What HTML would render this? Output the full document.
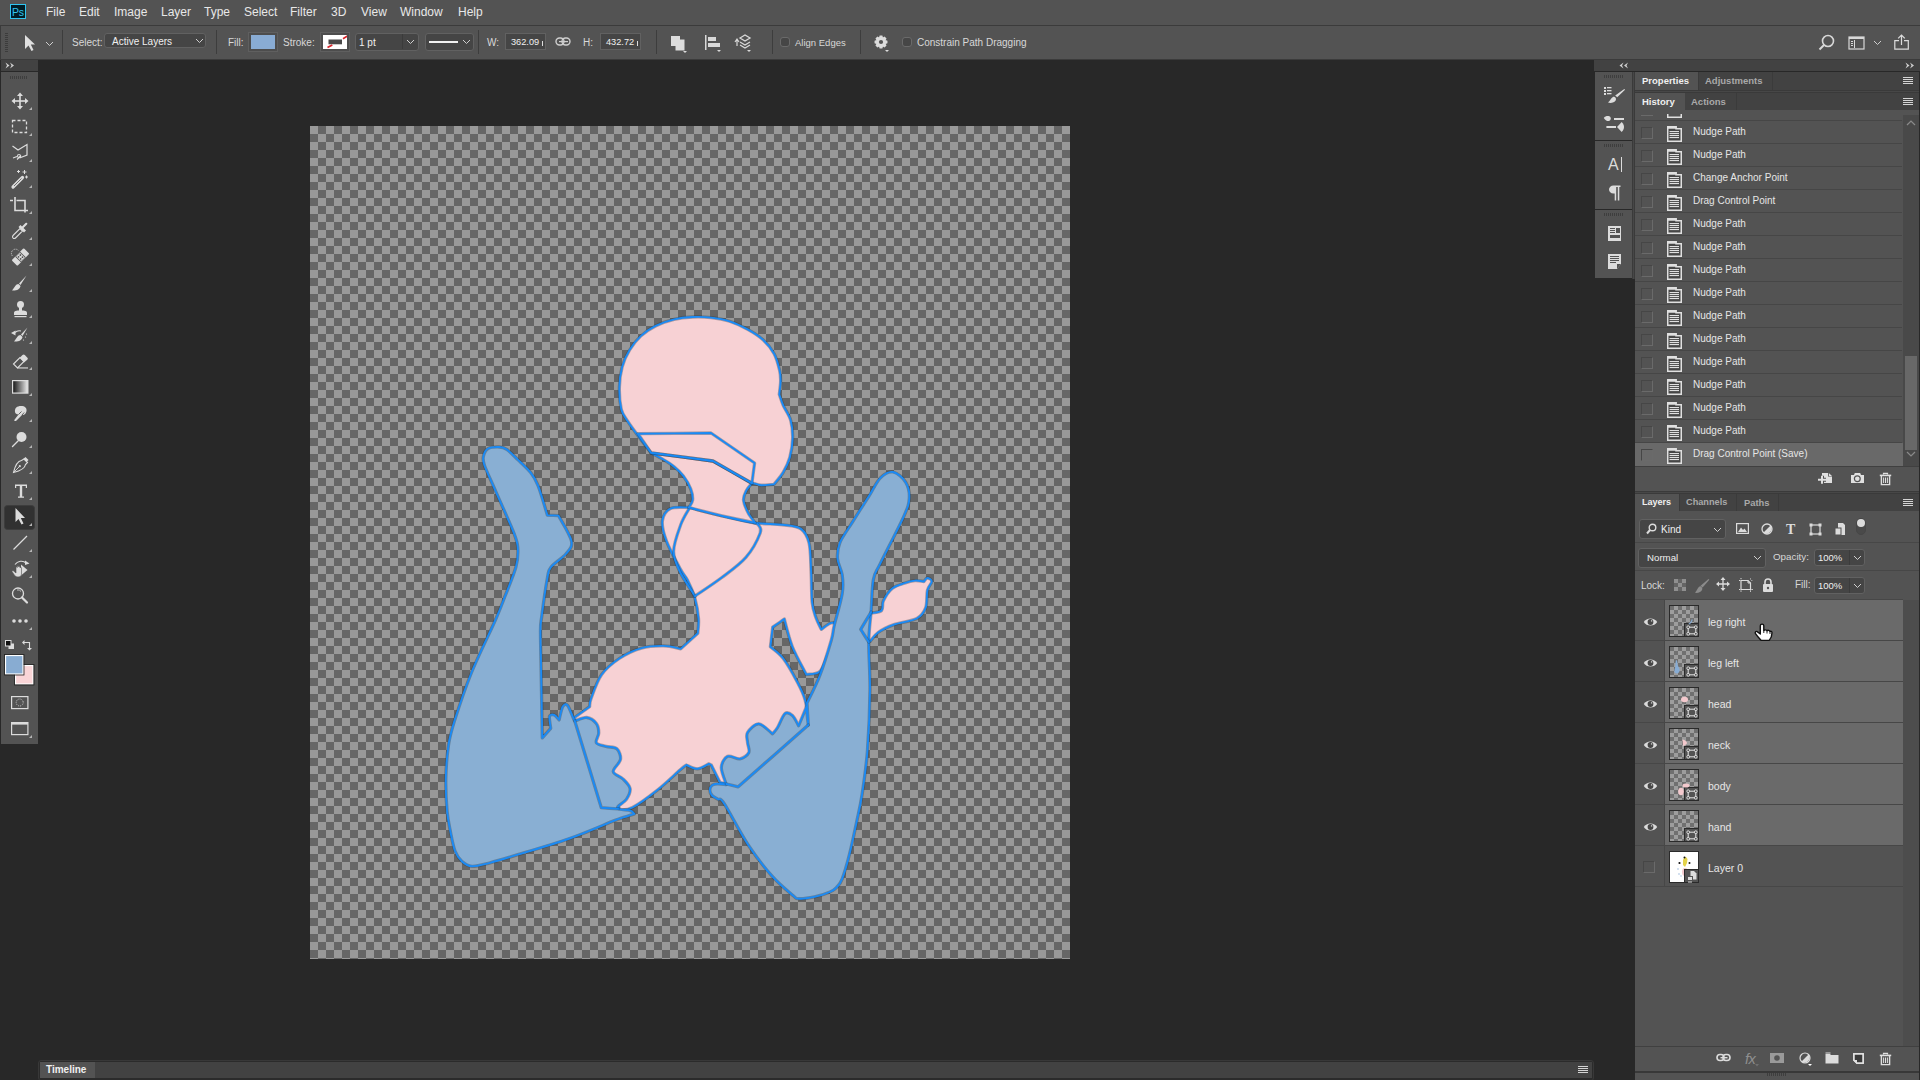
<!DOCTYPE html><html><head><meta charset="utf-8"><style>html,body{margin:0;padding:0;}body{width:1920px;height:1080px;overflow:hidden;position:relative;background:#282828;font-family:"Liberation Sans",sans-serif;}</style></head><body>
<div style="position:absolute;left:0px;top:0px;width:1920px;height:25px;background:#535353"></div>
<div style="position:absolute;left:0px;top:25px;width:1920px;height:1px;background:#3b3b3b"></div>
<div style="position:absolute;left:10px;top:4px;width:16px;height:15px;background:#001d26;box-sizing:border-box;border:1px solid #31c5f0"></div>
<div style="position:absolute;left:12px;top:6px;font-size:10.5px;line-height:12.5px;color:#31c5f0;font-weight:normal;white-space:nowrap;letter-spacing:-0.3px">Ps</div>
<div style="position:absolute;left:46px;top:5px;font-size:12px;line-height:14px;color:#e8e8e8;font-weight:normal;white-space:nowrap;">File</div>
<div style="position:absolute;left:79px;top:5px;font-size:12px;line-height:14px;color:#e8e8e8;font-weight:normal;white-space:nowrap;">Edit</div>
<div style="position:absolute;left:114px;top:5px;font-size:12px;line-height:14px;color:#e8e8e8;font-weight:normal;white-space:nowrap;">Image</div>
<div style="position:absolute;left:161px;top:5px;font-size:12px;line-height:14px;color:#e8e8e8;font-weight:normal;white-space:nowrap;">Layer</div>
<div style="position:absolute;left:204px;top:5px;font-size:12px;line-height:14px;color:#e8e8e8;font-weight:normal;white-space:nowrap;">Type</div>
<div style="position:absolute;left:244px;top:5px;font-size:12px;line-height:14px;color:#e8e8e8;font-weight:normal;white-space:nowrap;">Select</div>
<div style="position:absolute;left:290px;top:5px;font-size:12px;line-height:14px;color:#e8e8e8;font-weight:normal;white-space:nowrap;">Filter</div>
<div style="position:absolute;left:331px;top:5px;font-size:12px;line-height:14px;color:#e8e8e8;font-weight:normal;white-space:nowrap;">3D</div>
<div style="position:absolute;left:361px;top:5px;font-size:12px;line-height:14px;color:#e8e8e8;font-weight:normal;white-space:nowrap;">View</div>
<div style="position:absolute;left:400px;top:5px;font-size:12px;line-height:14px;color:#e8e8e8;font-weight:normal;white-space:nowrap;">Window</div>
<div style="position:absolute;left:458px;top:5px;font-size:12px;line-height:14px;color:#e8e8e8;font-weight:normal;white-space:nowrap;">Help</div>
<div style="position:absolute;left:0px;top:26px;width:1920px;height:33px;background:#535353"></div>
<div style="position:absolute;left:0px;top:26px;width:1px;height:33px;background:#3b3b3b"></div>
<div style="position:absolute;left:0px;top:59px;width:1920px;height:1px;background:#3b3b3b"></div>
<svg style="position:absolute;left:5px;top:33px;" width="4" height="20" viewBox="0 0 4 20"><rect x="0" y="0" width="3" height="1" fill="#3c3c3c"/><rect x="0" y="2" width="3" height="1" fill="#3c3c3c"/><rect x="0" y="4" width="3" height="1" fill="#3c3c3c"/><rect x="0" y="6" width="3" height="1" fill="#3c3c3c"/><rect x="0" y="8" width="3" height="1" fill="#3c3c3c"/><rect x="0" y="10" width="3" height="1" fill="#3c3c3c"/><rect x="0" y="12" width="3" height="1" fill="#3c3c3c"/><rect x="0" y="14" width="3" height="1" fill="#3c3c3c"/><rect x="0" y="16" width="3" height="1" fill="#3c3c3c"/><rect x="0" y="18" width="3" height="1" fill="#3c3c3c"/></svg>
<svg style="position:absolute;left:24px;top:34px;" width="12" height="18" viewBox="0 0 12 18"><path d="M1 1 L1 15 L4.5 11.5 L7.5 17 L9.5 16 L6.8 10.5 L11 10.5 Z" fill="#e0e0e0"/></svg>
<svg style="position:absolute;left:45px;top:41px;" width="9" height="6" viewBox="0 0 9 6"><path d="M1 1 L4.5 4.5 L8 1" stroke="#cfcfcf" fill="none" stroke-width="1"/></svg>
<div style="position:absolute;left:62px;top:30px;width:1px;height:24px;background:#3d3d3d"></div>
<div style="position:absolute;left:72px;top:37px;font-size:10px;line-height:12px;color:#d8d8d8;font-weight:normal;white-space:nowrap;">Select:</div>
<div style="position:absolute;left:104px;top:33px;width:102px;height:15px;background:#454545;border:1px solid #616161;border-radius:3px;box-sizing:border-box"></div>
<div style="position:absolute;left:112px;top:36px;font-size:10px;line-height:12px;color:#f0f0f0;font-weight:normal;white-space:nowrap;">Active Layers</div>
<svg style="position:absolute;left:195px;top:38px;" width="9" height="6" viewBox="0 0 9 6"><path d="M1 1 L4.5 4.5 L8 1" stroke="#cfcfcf" fill="none" stroke-width="1"/></svg>
<div style="position:absolute;left:216px;top:30px;width:1px;height:24px;background:#3d3d3d"></div>
<div style="position:absolute;left:228px;top:37px;font-size:10px;line-height:12px;color:#d8d8d8;font-weight:normal;white-space:nowrap;">Fill:</div>
<div style="position:absolute;left:248px;top:32px;width:30px;height:20px;background:#4d4d4d;border:1px solid #5f5f5f;box-sizing:border-box"></div>
<div style="position:absolute;left:251px;top:35px;width:24px;height:14px;background:#89acd4"></div>
<div style="position:absolute;left:283px;top:37px;font-size:10px;line-height:12px;color:#d8d8d8;font-weight:normal;white-space:nowrap;">Stroke:</div>
<div style="position:absolute;left:320px;top:32px;width:30px;height:20px;background:#4d4d4d;border:1px solid #5f5f5f;box-sizing:border-box"></div>
<svg style="position:absolute;left:323px;top:35px;" width="24" height="14" viewBox="0 0 24 14"><rect width="24" height="14" fill="#fff"/><rect x="5.5" y="4.5" width="13.5" height="4.8" fill="#4a4a4a"/><path d="M4.5 12.6 L9.3 9.9 M20 3.7 L24.5 1" stroke="#d9242a" stroke-width="1.7"/></svg>
<div style="position:absolute;left:355px;top:33px;width:64px;height:18px;background:#454545;border:1px solid #616161;border-radius:3px;box-sizing:border-box"></div>
<div style="position:absolute;left:402px;top:34px;width:1px;height:15px;background:#3b3b3b"></div>
<div style="position:absolute;left:359px;top:37px;font-size:10px;line-height:12px;color:#f0f0f0;font-weight:normal;white-space:nowrap;">1 pt</div>
<svg style="position:absolute;left:406px;top:39px;" width="9" height="6" viewBox="0 0 9 6"><path d="M1 1 L4.5 4.5 L8 1" stroke="#cfcfcf" fill="none" stroke-width="1"/></svg>
<div style="position:absolute;left:425px;top:33px;width:49px;height:18px;background:#454545;border:1px solid #616161;border-radius:3px;box-sizing:border-box"></div>
<div style="position:absolute;left:429px;top:41px;width:29px;height:2px;background:#f0f0f0"></div>
<svg style="position:absolute;left:462px;top:39px;" width="9" height="6" viewBox="0 0 9 6"><path d="M1 1 L4.5 4.5 L8 1" stroke="#cfcfcf" fill="none" stroke-width="1"/></svg>
<div style="position:absolute;left:478px;top:30px;width:1px;height:24px;background:#3d3d3d"></div>
<div style="position:absolute;left:487px;top:37px;font-size:10px;line-height:12px;color:#d8d8d8;font-weight:normal;white-space:nowrap;">W:</div>
<div style="position:absolute;left:505px;top:33px;width:41px;height:17px;background:#454545;border:1px solid #616161;box-sizing:border-box"></div>
<div style="position:absolute;left:511px;top:37px;font-size:9.2px;line-height:11.2px;color:#f0f0f0;font-weight:normal;white-space:nowrap;">362.09</div>
<div style="position:absolute;left:542px;top:41px;width:1px;height:5px;background:#ddd"></div>
<svg style="position:absolute;left:555px;top:37px;" width="17" height="9" viewBox="0 0 17 9"><rect x="1" y="1" width="8" height="7" rx="3.5" stroke="#cfcfcf" fill="none" stroke-width="1.4"/><rect x="7" y="1" width="8" height="7" rx="3.5" stroke="#cfcfcf" fill="none" stroke-width="1.4"/><rect x="4" y="4" width="9" height="1.2" fill="#cfcfcf"/></svg>
<div style="position:absolute;left:583px;top:37px;font-size:10px;line-height:12px;color:#d8d8d8;font-weight:normal;white-space:nowrap;">H:</div>
<div style="position:absolute;left:600px;top:33px;width:41px;height:17px;background:#454545;border:1px solid #616161;box-sizing:border-box"></div>
<div style="position:absolute;left:606px;top:37px;font-size:9.2px;line-height:11.2px;color:#f0f0f0;font-weight:normal;white-space:nowrap;">432.72</div>
<div style="position:absolute;left:637px;top:41px;width:1px;height:5px;background:#ddd"></div>
<div style="position:absolute;left:656px;top:30px;width:1px;height:24px;background:#3d3d3d"></div>
<svg style="position:absolute;left:670px;top:35px;" width="18" height="18" viewBox="0 0 18 18"><path d="M1 1 H10 V4.5 H14.5 V15.5 H5.5 V11 H1Z" fill="#dcdcdc"/><path d="M13 16 L17 16 L15 18Z" fill="#dcdcdc"/></svg>
<svg style="position:absolute;left:704px;top:34px;" width="18" height="18" viewBox="0 0 18 18"><rect x="1" y="1" width="1.5" height="15" fill="#d8d8d8"/><rect x="4" y="3" width="8" height="4" fill="#d8d8d8"/><rect x="4" y="9" width="12" height="4" fill="#d8d8d8"/><path d="M13 16 L17 16 L15 18Z" fill="#d8d8d8"/></svg>
<svg style="position:absolute;left:733px;top:33px;" width="20" height="20" viewBox="0 0 20 20"><path d="M2 9 L4 6 L6 9 M4 7 V13" stroke="#d8d8d8" fill="none" stroke-width="1.2"/><path d="M7 5 L12 2 L17 5 L12 8Z M7 9 L12 12 L17 9 M7 12 L12 15 L17 12" stroke="#d8d8d8" fill="none" stroke-width="1.3"/><path d="M14 17 L18 17 L16 19Z" fill="#d8d8d8"/></svg>
<div style="position:absolute;left:772px;top:30px;width:1px;height:24px;background:#3d3d3d"></div>
<div style="position:absolute;left:780px;top:37px;width:10px;height:10px;border:1px solid #6a6a6a;background:#464646;border-radius:3px;box-sizing:border-box"></div>
<div style="position:absolute;left:795px;top:37px;font-size:9.5px;line-height:11.5px;color:#d8d8d8;font-weight:normal;white-space:nowrap;">Align Edges</div>
<div style="position:absolute;left:860px;top:30px;width:1px;height:24px;background:#3d3d3d"></div>
<svg style="position:absolute;left:873px;top:34px;" width="17" height="18" viewBox="0 0 17 18"><path d="M12.48 6.01 L14.46 6.63 L14.46 9.37 L12.48 9.99 L12.57 9.76 L13.54 11.59 L11.59 13.54 L9.76 12.57 L9.99 12.48 L9.37 14.46 L6.63 14.46 L6.01 12.48 L6.24 12.57 L4.41 13.54 L2.46 11.59 L3.43 9.76 L3.52 9.99 L1.54 9.37 L1.54 6.63 L3.52 6.01 L3.43 6.24 L2.46 4.41 L4.41 2.46 L6.24 3.43 L6.01 3.52 L6.63 1.54 L9.37 1.54 L9.99 3.52 L9.76 3.43 L11.59 2.46 L13.54 4.41 L12.57 6.24Z" fill="#dcdcdc"/><circle cx="8" cy="8" r="2.1" fill="#535353"/><path d="M12 16 L16 16 L14 18Z" fill="#dcdcdc"/></svg>
<div style="position:absolute;left:902px;top:37px;width:10px;height:10px;border:1px solid #6a6a6a;background:#464646;border-radius:3px;box-sizing:border-box"></div>
<div style="position:absolute;left:917px;top:37px;font-size:10px;line-height:12px;color:#d8d8d8;font-weight:normal;white-space:nowrap;">Constrain Path Dragging</div>
<svg style="position:absolute;left:1818px;top:34px;" width="17" height="17" viewBox="0 0 17 17"><circle cx="10" cy="7" r="5.5" fill="none" stroke="#d8d8d8" stroke-width="1.6"/><path d="M6 11 L1.5 15.5" stroke="#d8d8d8" stroke-width="2"/></svg>
<svg style="position:absolute;left:1848px;top:36px;" width="17" height="14" viewBox="0 0 17 14"><rect x="1" y="1" width="15" height="12" fill="none" stroke="#d8d8d8" stroke-width="1.2"/><rect x="1" y="1" width="15" height="2" fill="#d8d8d8"/><rect x="3" y="5" width="2" height="1" fill="#d8d8d8"/><rect x="3" y="7" width="2" height="1" fill="#d8d8d8"/><rect x="3" y="9" width="2" height="1" fill="#d8d8d8"/><rect x="6" y="4" width="1" height="8" fill="#d8d8d8"/></svg>
<svg style="position:absolute;left:1873px;top:40px;" width="9" height="6" viewBox="0 0 9 6"><path d="M1 1 L4.5 4.5 L8 1" stroke="#cfcfcf" fill="none" stroke-width="1"/></svg>
<svg style="position:absolute;left:1893px;top:33px;" width="18" height="18" viewBox="0 0 18 18"><path d="M6 7.6 H1.8 V16.2 H15.3 V7.6 H11" fill="none" stroke="#dcdcdc" stroke-width="1.2"/><path d="M8.5 12 V2 M5.2 5.3 L8.5 2 L11.8 5.3" fill="none" stroke="#dcdcdc" stroke-width="1.2"/></svg>
<div style="position:absolute;left:0px;top:60px;width:39px;height:1020px;background:#282828"></div>
<div style="position:absolute;left:1px;top:60px;width:37px;height:11px;background:#424242"></div>
<svg style="position:absolute;left:5px;top:62px;" width="10" height="7" viewBox="0 0 10 7"><path d="M0.5 0.5 L4.5 3.5 L0.5 6.5 L2 3.5Z M5 0.5 L9 3.5 L5 6.5 L6.5 3.5Z" fill="#d0d0d0"/></svg>
<div style="position:absolute;left:1px;top:72px;width:37px;height:672px;background:#535353"></div>
<svg style="position:absolute;left:10px;top:76px;" width="18" height="4" viewBox="0 0 18 4"><rect x="0" y="0" width="1" height="3" fill="#3e3e3e"/><rect x="2" y="0" width="1" height="3" fill="#3e3e3e"/><rect x="4" y="0" width="1" height="3" fill="#3e3e3e"/><rect x="6" y="0" width="1" height="3" fill="#3e3e3e"/><rect x="8" y="0" width="1" height="3" fill="#3e3e3e"/><rect x="10" y="0" width="1" height="3" fill="#3e3e3e"/><rect x="12" y="0" width="1" height="3" fill="#3e3e3e"/><rect x="14" y="0" width="1" height="3" fill="#3e3e3e"/><rect x="16" y="0" width="1" height="3" fill="#3e3e3e"/></svg>
<svg style="position:absolute;left:0;top:0" width="40" height="750" viewBox="0 0 40 750"><g fill="#dcdcdc"><rect x="19.2" y="95" width="1.6" height="13"/><rect x="13.5" y="100.2" width="13" height="1.6"/><path d="M20 92.5 L23 96 H17Z M20 109.5 L23 106 H17Z M11.5 101 L15 98 V104Z M28.5 101 L25 98 V104Z"/></g><path d="M32 107 L32 110 L29 110 Z" fill="#b5b5b5"/><rect x="12.5" y="120.5" width="14" height="12" fill="none" stroke="#dcdcdc" stroke-width="1.3" stroke-dasharray="3 2"/><path d="M32 133 L32 136 L29 136 Z" fill="#b5b5b5"/><path d="M12.5 146 L18 150 L27 144.5 L27 155 L19.5 158 M17 159.5 L21 155.5 M13 158 L17 156.5" fill="none" stroke="#dcdcdc" stroke-width="1.2"/><circle cx="19" cy="156" r="1.5" fill="none" stroke="#dcdcdc" stroke-width="1.1"/><path d="M32 159 L32 162 L29 162 Z" fill="#b5b5b5"/><path d="M13 187 L22.5 177.5" stroke="#dcdcdc" stroke-width="3.2" stroke-linecap="round"/><path d="M14 186 L21.5 178.5" stroke="#535353" stroke-width="0.8"/><path d="M18.5 170 V173 M17 171.5 H20 M24.5 170 V174 M22.5 172 H26.5 M26.5 175.5 V178.5 M25 177 H28" stroke="#dcdcdc" stroke-width="1"/><path d="M32 185 L32 188 L29 188 Z" fill="#b5b5b5"/><path d="M15 197 V210.5 H28 M10 200.5 H13 M16.5 200.5 H25 V212.5" fill="none" stroke="#dcdcdc" stroke-width="1.6"/><path d="M32 211 L32 214 L29 214 Z" fill="#b5b5b5"/><path d="M13.2 238.2 C12 237 12.5 236 13.5 235 L20 228.5 L22.5 231 L16 237.5 C15 238.5 14.2 239 13.2 238.2Z" fill="none" stroke="#dcdcdc" stroke-width="1.1"/><path d="M18.5 227 L24 232.5 L26 230.5 L23.5 228 L27 224.5 C28 223.5 27 222 25.5 223 L22 226.5 L20.5 225Z" fill="#dcdcdc"/><path d="M32 237 L32 240 L29 240 Z" fill="#b5b5b5"/><g transform="rotate(-45 20.5 257)"><rect x="12" y="253" width="17" height="8" rx="1" fill="#dcdcdc"/><rect x="17" y="253" width="7" height="8" fill="#535353"/><rect x="17.8" y="253.6" width="5.4" height="6.8" fill="#dcdcdc"/><circle cx="19.2" cy="255.5" r="0.9" fill="#535353"/><circle cx="21.8" cy="255.5" r="0.9" fill="#535353"/><circle cx="19.2" cy="258.5" r="0.9" fill="#535353"/><circle cx="21.8" cy="258.5" r="0.9" fill="#535353"/></g><path d="M12.5 256 A4 4 0 0 1 18.5 250.5" fill="none" stroke="#dcdcdc" stroke-width="0.9" stroke-dasharray="1 1"/><path d="M32 263 L32 266 L29 266 Z" fill="#b5b5b5"/><path d="M26.5 275.5 L19 283.5 L20.5 285 Z" fill="#dcdcdc"/><path d="M18.5 284 C15.5 284 15 287 12 290.5 C16 291 20 289.5 20.5 286Z" fill="#dcdcdc"/><path d="M32 289 L32 292 L29 292 Z" fill="#b5b5b5"/><circle cx="20.5" cy="304.5" r="3.5" fill="#dcdcdc"/><rect x="19" y="306" width="3" height="5" fill="#dcdcdc"/><path d="M14 313 C14 311 16 310.5 20.5 310.5 C25 310.5 27 311 27 313 V315 H14Z" fill="#dcdcdc"/><rect x="14.5" y="316" width="12" height="1.2" fill="#dcdcdc"/><path d="M32 315 L32 318 L29 318 Z" fill="#b5b5b5"/><path d="M27.5 327.5 L21 334.5 L22.5 336 Z" fill="#dcdcdc"/><path d="M20.5 335 C17.5 335 17 338 14 341.5 C18 342 22 340.5 22.5 337Z" fill="#dcdcdc"/><path d="M11 333 L15.5 330.5 L15.5 335.5Z" fill="#dcdcdc"/><path d="M15 332.5 C17 330.5 19 330.5 21 331" fill="none" stroke="#dcdcdc" stroke-width="1.1"/><circle cx="26.5" cy="334" r="0.6" fill="#dcdcdc"/><circle cx="25.5" cy="337" r="0.6" fill="#dcdcdc"/><circle cx="23.5" cy="340" r="0.6" fill="#dcdcdc"/><path d="M32 341 L32 344 L29 344 Z" fill="#b5b5b5"/><path d="M13.5 364 L20 357.5 L24 361.5 L17.5 368 Z" fill="none" stroke="#dcdcdc" stroke-width="1.1"/><path d="M20 357.5 L22.5 355 C23.3 354.2 24 354.2 24.8 355 L27.2 357.4 C28 358.2 28 358.9 27.2 359.7 L24 362.5Z" fill="#dcdcdc"/><rect x="17.5" y="367.4" width="10.5" height="1.1" fill="#dcdcdc"/><path d="M32 367 L32 370 L29 370 Z" fill="#b5b5b5"/><defs><linearGradient id="gr" x1="0" x2="1"><stop offset="0" stop-color="#111"/><stop offset="1" stop-color="#eee"/></linearGradient></defs><rect x="12.6" y="380.6" width="15.3" height="12.5" fill="url(#gr)" stroke="#dcdcdc" stroke-width="1.2"/><path d="M32 393 L32 396 L29 396 Z" fill="#b5b5b5"/><path d="M15 412 C14.5 408 17 406 21 406 C25 406 27 408 26.5 411 C26 414 24 415.5 22 415 L16.5 420.5 C15.5 421.5 14 421 14.3 420 L18.5 414.5 C16.5 414.5 15.2 413.5 15 412Z" fill="#dcdcdc"/><path d="M18.5 414.5 L21.5 411.5 M22 415 L24.2 412.5" stroke="#535353" stroke-width="0.9"/><path d="M32 419 L32 422 L29 422 Z" fill="#b5b5b5"/><circle cx="21.5" cy="437" r="5" fill="#dcdcdc"/><path d="M18 441 L12.5 446.5" stroke="#dcdcdc" stroke-width="1.4" stroke-linecap="round"/><path d="M32 445 L32 448 L29 448 Z" fill="#b5b5b5"/><path d="M24 459 L27.5 462.5 L25.5 464.5 C25 468 22 470.5 13.5 472.5 C15.5 464 18 461 21.5 460.5Z" fill="none" stroke="#dcdcdc" stroke-width="1.1"/><path d="M23.5 458.8 L25.5 457 L28.5 460 L26.5 462Z" fill="#dcdcdc"/><circle cx="19.8" cy="466.2" r="1.1" fill="#dcdcdc"/><path d="M13.8 472.2 L19.2 466.8" stroke="#dcdcdc" stroke-width="0.9"/><path d="M32 471 L32 474 L29 474 Z" fill="#b5b5b5"/><path d="M15 484.5 H27 V488 H25.8 V486 H22.2 V496.5 H24 V497.8 H18 V496.5 H19.8 V486 H16.2 V488 H15Z" fill="#dcdcdc"/><path d="M32 497 L32 500 L29 500 Z" fill="#b5b5b5"/><rect x="4.5" y="505.5" width="30" height="24" rx="3" fill="#313131" stroke="#3d3d3d" stroke-width="1"/><path d="M15.5 508 V522 L18.5 519 L21.5 524.5 L23.5 523.5 L20.8 518 L25 518Z" fill="#dcdcdc"/><path d="M32 523 L32 526 L29 526 Z" fill="#b5b5b5"/><path d="M13.5 549.5 L27 536" stroke="#dcdcdc" stroke-width="1.3"/><path d="M32 549 L32 552 L29 552 Z" fill="#b5b5b5"/><path d="M15 564.5 C17.5 561 23 560 26 563" fill="none" stroke="#dcdcdc" stroke-width="1.1"/><path d="M25 560.5 L29.5 563.5 L25 565Z" fill="#dcdcdc"/><path d="M21 564.5 L27.5 570 L21 575.5Z" fill="#dcdcdc"/><path d="M13 570.5 L16 573 V567.5 C16 566.5 17.3 566.5 17.3 567.5 V566.5 C17.3 565.5 18.7 565.5 18.7 566.5 V567 C18.7 566 20.1 566 20.1 567 V568 C20.1 567 21.5 567 21.5 568 V574 C21.5 576 20 577 18 577 C16 577 15 576 14 574.5 L12 571.5Z" fill="#dcdcdc" stroke="#535353" stroke-width="0.6"/><path d="M32 575 L32 578 L29 578 Z" fill="#b5b5b5"/><circle cx="18" cy="593.5" r="5.5" fill="none" stroke="#dcdcdc" stroke-width="1.3"/><path d="M22 597.5 L27 602.5" stroke="#dcdcdc" stroke-width="2.2" stroke-linecap="round"/><path d="M17 590 A3.5 3.5 0 0 1 21 591.5" fill="none" stroke="#dcdcdc" stroke-width="0.8"/><circle cx="14" cy="621" r="1.8" fill="#dcdcdc"/><circle cx="20" cy="621" r="1.8" fill="#dcdcdc"/><circle cx="26" cy="621" r="1.8" fill="#dcdcdc"/><path d="M32 627 L32 630 L29 630 Z" fill="#b5b5b5"/><rect x="8.5" y="643.5" width="5.5" height="5.5" fill="#dcdcdc"/><rect x="5.5" y="640.5" width="5.5" height="5.5" fill="#111" stroke="#dcdcdc" stroke-width="1"/><path d="M23.5 642.5 H29.5 V648.5" fill="none" stroke="#dcdcdc" stroke-width="1.1"/><path d="M22 642.5 L24.5 640 V645Z M29.5 650.5 L27 648 H32Z" fill="#dcdcdc"/><rect x="15.5" y="665.5" width="17.5" height="18.5" fill="#f9d5d7" stroke="#fff" stroke-width="1.2"/><rect x="14.5" y="664.5" width="19.5" height="20.5" fill="none" stroke="#222" stroke-width="0.8"/><rect x="5.5" y="655.5" width="17.5" height="18.5" fill="#88acd2" stroke="#fff" stroke-width="1.2"/><rect x="4.5" y="654.5" width="19.5" height="20.5" fill="none" stroke="#222" stroke-width="0.8"/><rect x="11.6" y="696.6" width="16.3" height="12" fill="none" stroke="#dcdcdc" stroke-width="1.2"/><circle cx="19.7" cy="702.5" r="3.5" fill="none" stroke="#dcdcdc" stroke-width="0.9" stroke-dasharray="0.9 1.1"/><rect x="11.6" y="722.6" width="16.3" height="12" fill="none" stroke="#dcdcdc" stroke-width="1.2"/><rect x="11.6" y="722.6" width="16.3" height="2" fill="#dcdcdc"/><path d="M32 735 L32 738 L29 738 Z" fill="#b5b5b5"/></svg>
<div style="position:absolute;left:310px;top:126px;width:760px;height:833px;background-color:#666666;background-image:linear-gradient(45deg,#999999 25%,transparent 25%,transparent 75%,#999999 75%),linear-gradient(45deg,#999999 25%,transparent 25%,transparent 75%,#999999 75%);background-size:16px 16px;background-position:8px 0,0 8px"></div>
<svg width="1920" height="1080" viewBox="0 0 1920 1080" style="position:absolute;left:0;top:0">
<g stroke="#1a8af5" stroke-width="1.9" stroke-linejoin="round" stroke-linecap="round">
<path d="M871.0 613.2 C872.8 612.8 879.5 612.6 881.6 610.5 C883.7 608.4 881.6 604.5 883.4 600.8 C885.2 597.1 888.7 591.4 892.2 588.5 C895.7 585.6 900.7 584.5 904.5 583.2 C908.3 581.9 911.8 580.9 915.0 580.6 C918.2 580.3 922.4 581.4 923.9 581.5 C924.5 580.9 926.1 578.0 927.4 578.0 C928.7 578.0 931.8 579.5 931.8 581.5 C931.8 583.5 928.4 585.9 927.4 590.3 C926.4 594.7 927.4 603.2 925.6 607.9 C923.8 612.6 922.1 615.7 916.8 618.5 C911.5 621.3 900.3 622.3 893.9 624.6 C887.5 626.9 882.0 629.7 878.1 632.5 C874.2 635.3 871.5 639.8 870.2 641.3 C868.5 639.4 861.7 631.9 860.0 630.0 C861.8 627.2 869.2 616.0 871.0 613.2Z" fill="#f7d1d4" stroke="none"/>
<path d="M871.0 613.2 C872.8 612.8 879.5 612.6 881.6 610.5 C883.7 608.4 881.6 604.5 883.4 600.8 C885.2 597.1 888.7 591.4 892.2 588.5 C895.7 585.6 900.7 584.5 904.5 583.2 C908.3 581.9 911.8 580.9 915.0 580.6 C918.2 580.3 922.4 581.4 923.9 581.5 C924.5 580.9 926.1 578.0 927.4 578.0 C928.7 578.0 931.8 579.5 931.8 581.5 C931.8 583.5 928.4 585.9 927.4 590.3 C926.4 594.7 927.4 603.2 925.6 607.9 C923.8 612.6 922.1 615.7 916.8 618.5 C911.5 621.3 900.3 622.3 893.9 624.6 C887.5 626.9 882.0 629.7 878.1 632.5 C874.2 635.3 871.5 639.8 870.2 641.3 C868.5 639.4 861.7 631.9 860.0 630.0 C861.8 627.2 869.2 616.0 871.0 613.2Z" fill="none" stroke="#203040" stroke-opacity="0.35" stroke-width="3.3"/>
<path d="M871.0 613.2 C872.8 612.8 879.5 612.6 881.6 610.5 C883.7 608.4 881.6 604.5 883.4 600.8 C885.2 597.1 888.7 591.4 892.2 588.5 C895.7 585.6 900.7 584.5 904.5 583.2 C908.3 581.9 911.8 580.9 915.0 580.6 C918.2 580.3 922.4 581.4 923.9 581.5 C924.5 580.9 926.1 578.0 927.4 578.0 C928.7 578.0 931.8 579.5 931.8 581.5 C931.8 583.5 928.4 585.9 927.4 590.3 C926.4 594.7 927.4 603.2 925.6 607.9 C923.8 612.6 922.1 615.7 916.8 618.5 C911.5 621.3 900.3 622.3 893.9 624.6 C887.5 626.9 882.0 629.7 878.1 632.5 C874.2 635.3 871.5 639.8 870.2 641.3 C868.5 639.4 861.7 631.9 860.0 630.0 C861.8 627.2 869.2 616.0 871.0 613.2Z" fill="none"/>
<path d="M688.9 507.5 C695.0 509.0 714.7 514.2 725.6 516.7 C736.5 519.2 744.6 521.4 754.1 522.8 C763.6 524.1 774.8 523.8 782.6 524.8 C790.4 525.8 796.5 525.8 800.9 528.9 C805.3 532.0 807.4 536.0 809.1 543.1 C810.8 550.2 810.6 561.9 811.1 571.7 C811.6 581.6 811.4 594.7 812.1 602.2 C812.9 609.7 814.1 612.2 815.6 616.7 C817.1 621.2 820.3 627.3 821.3 629.4 C822.6 628.4 827.1 624.8 829.4 623.6 C831.7 622.5 834.2 622.7 835.2 622.5 C836.0 625.4 839.2 637.1 840.0 640.0 C838.2 641.9 832.7 646.2 829.4 651.4 C826.1 656.6 824.1 667.2 820.2 671.1 C816.4 675.0 808.6 673.9 806.3 674.5 C804.0 669.9 796.1 656.0 792.4 646.8 C788.7 637.5 785.6 623.6 784.3 619.0 C782.4 620.4 774.6 625.8 772.7 627.1 C772.3 630.4 770.8 643.5 770.4 646.8 C772.5 648.7 778.7 652.5 783.1 658.3 C787.5 664.1 793.3 674.5 797.0 681.5 C800.7 688.5 803.1 692.8 805.1 700.0 C807.1 707.2 808.2 720.8 808.8 725.0 C800.7 735.8 768.1 779.2 760.0 790.0 C753.3 788.8 726.7 783.8 720.0 782.5 C718.5 779.6 712.8 767.9 711.3 765.0 C710.9 764.8 709.2 764.0 708.8 763.8 C706.9 764.6 701.2 768.6 697.5 768.8 C693.8 769.0 688.2 765.6 686.3 765.0 C685.2 765.8 684.8 765.8 680.0 770.0 C675.2 774.2 665.4 783.8 657.5 790.0 C649.6 796.2 638.8 804.2 632.5 807.5 C626.2 810.8 622.1 809.6 620.0 810.0 C612.4 794.6 581.8 733.2 574.1 717.8 C576.7 715.9 587.0 708.6 589.6 706.7 C589.9 705.3 589.1 703.8 591.1 698.5 C593.1 693.2 596.8 681.5 601.5 674.8 C606.2 668.1 612.6 663.0 619.3 658.5 C626.0 654.0 634.1 650.2 641.5 648.1 C648.9 646.0 657.2 645.8 663.7 645.9 C670.2 646.0 677.9 648.4 680.7 648.9 C683.6 646.3 694.9 635.9 697.8 633.3 C697.9 630.8 699.0 624.4 698.5 618.5 C698.0 612.6 696.6 604.2 694.8 597.8 C692.9 591.4 689.8 584.7 687.4 580.0 C685.0 575.3 684.2 576.1 680.7 569.6 C677.2 563.1 669.5 549.2 666.5 541.1 C663.5 533.0 661.7 526.1 662.4 520.7 C663.1 515.3 666.2 510.7 670.6 508.5 C675.0 506.3 685.9 507.7 688.9 507.5Z" fill="#f7d1d4" stroke="none"/>
<path d="M688.9 507.5 C695.0 509.0 714.7 514.2 725.6 516.7 C736.5 519.2 744.6 521.4 754.1 522.8 C763.6 524.1 774.8 523.8 782.6 524.8 C790.4 525.8 796.5 525.8 800.9 528.9 C805.3 532.0 807.4 536.0 809.1 543.1 C810.8 550.2 810.6 561.9 811.1 571.7 C811.6 581.6 811.4 594.7 812.1 602.2 C812.9 609.7 814.1 612.2 815.6 616.7 C817.1 621.2 820.3 627.3 821.3 629.4 C822.6 628.4 827.1 624.8 829.4 623.6 C831.7 622.5 834.2 622.7 835.2 622.5 C836.0 625.4 839.2 637.1 840.0 640.0 C838.2 641.9 832.7 646.2 829.4 651.4 C826.1 656.6 824.1 667.2 820.2 671.1 C816.4 675.0 808.6 673.9 806.3 674.5 C804.0 669.9 796.1 656.0 792.4 646.8 C788.7 637.5 785.6 623.6 784.3 619.0 C782.4 620.4 774.6 625.8 772.7 627.1 C772.3 630.4 770.8 643.5 770.4 646.8 C772.5 648.7 778.7 652.5 783.1 658.3 C787.5 664.1 793.3 674.5 797.0 681.5 C800.7 688.5 803.1 692.8 805.1 700.0 C807.1 707.2 808.2 720.8 808.8 725.0 C800.7 735.8 768.1 779.2 760.0 790.0 C753.3 788.8 726.7 783.8 720.0 782.5 C718.5 779.6 712.8 767.9 711.3 765.0 C710.9 764.8 709.2 764.0 708.8 763.8 C706.9 764.6 701.2 768.6 697.5 768.8 C693.8 769.0 688.2 765.6 686.3 765.0 C685.2 765.8 684.8 765.8 680.0 770.0 C675.2 774.2 665.4 783.8 657.5 790.0 C649.6 796.2 638.8 804.2 632.5 807.5 C626.2 810.8 622.1 809.6 620.0 810.0 C612.4 794.6 581.8 733.2 574.1 717.8 C576.7 715.9 587.0 708.6 589.6 706.7 C589.9 705.3 589.1 703.8 591.1 698.5 C593.1 693.2 596.8 681.5 601.5 674.8 C606.2 668.1 612.6 663.0 619.3 658.5 C626.0 654.0 634.1 650.2 641.5 648.1 C648.9 646.0 657.2 645.8 663.7 645.9 C670.2 646.0 677.9 648.4 680.7 648.9 C683.6 646.3 694.9 635.9 697.8 633.3 C697.9 630.8 699.0 624.4 698.5 618.5 C698.0 612.6 696.6 604.2 694.8 597.8 C692.9 591.4 689.8 584.7 687.4 580.0 C685.0 575.3 684.2 576.1 680.7 569.6 C677.2 563.1 669.5 549.2 666.5 541.1 C663.5 533.0 661.7 526.1 662.4 520.7 C663.1 515.3 666.2 510.7 670.6 508.5 C675.0 506.3 685.9 507.7 688.9 507.5Z" fill="none" stroke="#203040" stroke-opacity="0.35" stroke-width="3.3"/>
<path d="M688.9 507.5 C695.0 509.0 714.7 514.2 725.6 516.7 C736.5 519.2 744.6 521.4 754.1 522.8 C763.6 524.1 774.8 523.8 782.6 524.8 C790.4 525.8 796.5 525.8 800.9 528.9 C805.3 532.0 807.4 536.0 809.1 543.1 C810.8 550.2 810.6 561.9 811.1 571.7 C811.6 581.6 811.4 594.7 812.1 602.2 C812.9 609.7 814.1 612.2 815.6 616.7 C817.1 621.2 820.3 627.3 821.3 629.4 C822.6 628.4 827.1 624.8 829.4 623.6 C831.7 622.5 834.2 622.7 835.2 622.5 C836.0 625.4 839.2 637.1 840.0 640.0 C838.2 641.9 832.7 646.2 829.4 651.4 C826.1 656.6 824.1 667.2 820.2 671.1 C816.4 675.0 808.6 673.9 806.3 674.5 C804.0 669.9 796.1 656.0 792.4 646.8 C788.7 637.5 785.6 623.6 784.3 619.0 C782.4 620.4 774.6 625.8 772.7 627.1 C772.3 630.4 770.8 643.5 770.4 646.8 C772.5 648.7 778.7 652.5 783.1 658.3 C787.5 664.1 793.3 674.5 797.0 681.5 C800.7 688.5 803.1 692.8 805.1 700.0 C807.1 707.2 808.2 720.8 808.8 725.0 C800.7 735.8 768.1 779.2 760.0 790.0 C753.3 788.8 726.7 783.8 720.0 782.5 C718.5 779.6 712.8 767.9 711.3 765.0 C710.9 764.8 709.2 764.0 708.8 763.8 C706.9 764.6 701.2 768.6 697.5 768.8 C693.8 769.0 688.2 765.6 686.3 765.0 C685.2 765.8 684.8 765.8 680.0 770.0 C675.2 774.2 665.4 783.8 657.5 790.0 C649.6 796.2 638.8 804.2 632.5 807.5 C626.2 810.8 622.1 809.6 620.0 810.0 C612.4 794.6 581.8 733.2 574.1 717.8 C576.7 715.9 587.0 708.6 589.6 706.7 C589.9 705.3 589.1 703.8 591.1 698.5 C593.1 693.2 596.8 681.5 601.5 674.8 C606.2 668.1 612.6 663.0 619.3 658.5 C626.0 654.0 634.1 650.2 641.5 648.1 C648.9 646.0 657.2 645.8 663.7 645.9 C670.2 646.0 677.9 648.4 680.7 648.9 C683.6 646.3 694.9 635.9 697.8 633.3 C697.9 630.8 699.0 624.4 698.5 618.5 C698.0 612.6 696.6 604.2 694.8 597.8 C692.9 591.4 689.8 584.7 687.4 580.0 C685.0 575.3 684.2 576.1 680.7 569.6 C677.2 563.1 669.5 549.2 666.5 541.1 C663.5 533.0 661.7 526.1 662.4 520.7 C663.1 515.3 666.2 510.7 670.6 508.5 C675.0 506.3 685.9 507.7 688.9 507.5Z" fill="none"/>
<path d="M688.9 509.0 C687.5 511.6 683.2 517.8 680.7 524.8 C678.2 531.8 673.7 543.4 673.6 551.3 C673.5 559.2 676.4 564.5 680.0 572.0 C683.6 579.5 692.5 592.1 695.0 596.1" fill="none" stroke="#203040" stroke-opacity="0.35" stroke-width="3.3"/>
<path d="M688.9 509.0 C687.5 511.6 683.2 517.8 680.7 524.8 C678.2 531.8 673.7 543.4 673.6 551.3 C673.5 559.2 676.4 564.5 680.0 572.0 C683.6 579.5 692.5 592.1 695.0 596.1" fill="none"/>
<path d="M695.0 596.1 C699.4 593.0 713.0 584.2 721.5 577.8 C730.0 571.3 739.4 564.9 745.9 557.4 C752.4 549.9 758.2 538.4 760.2 533.0 C762.2 527.6 759.2 526.5 758.2 524.8 C757.2 523.1 754.8 523.1 754.1 522.8" fill="none" stroke="#203040" stroke-opacity="0.35" stroke-width="3.3"/>
<path d="M695.0 596.1 C699.4 593.0 713.0 584.2 721.5 577.8 C730.0 571.3 739.4 564.9 745.9 557.4 C752.4 549.9 758.2 538.4 760.2 533.0 C762.2 527.6 759.2 526.5 758.2 524.8 C757.2 523.1 754.8 523.1 754.1 522.8" fill="none"/>
<path d="M651.0 452.8 C653.0 453.9 659.1 457.0 663.0 459.3 C666.9 461.6 670.7 463.9 674.1 466.7 C677.5 469.5 680.5 472.2 683.3 475.9 C686.1 479.6 689.2 484.9 690.7 488.9 C692.2 492.9 692.9 496.9 692.6 500.0 C692.3 503.1 689.5 506.2 688.9 507.5 C695.0 509.0 714.6 514.2 725.6 516.7 C736.6 519.2 750.2 521.8 755.1 522.8 C753.9 521.1 749.9 516.4 748.0 512.6 C746.1 508.8 743.8 503.6 743.5 500.0 C743.2 496.4 744.9 493.5 746.3 490.7 C747.7 487.9 751.0 484.5 751.9 483.3 C745.4 479.6 719.5 464.7 713.0 461.0 C702.7 459.6 661.3 454.2 651.0 452.8Z" fill="#f7d1d4" stroke="none"/>
<path d="M651.0 452.8 C653.0 453.9 659.1 457.0 663.0 459.3 C666.9 461.6 670.7 463.9 674.1 466.7 C677.5 469.5 680.5 472.2 683.3 475.9 C686.1 479.6 689.2 484.9 690.7 488.9 C692.2 492.9 692.9 496.9 692.6 500.0 C692.3 503.1 689.5 506.2 688.9 507.5 C695.0 509.0 714.6 514.2 725.6 516.7 C736.6 519.2 750.2 521.8 755.1 522.8 C753.9 521.1 749.9 516.4 748.0 512.6 C746.1 508.8 743.8 503.6 743.5 500.0 C743.2 496.4 744.9 493.5 746.3 490.7 C747.7 487.9 751.0 484.5 751.9 483.3 C745.4 479.6 719.5 464.7 713.0 461.0 C702.7 459.6 661.3 454.2 651.0 452.8Z" fill="none" stroke="#203040" stroke-opacity="0.35" stroke-width="3.3"/>
<path d="M651.0 452.8 C653.0 453.9 659.1 457.0 663.0 459.3 C666.9 461.6 670.7 463.9 674.1 466.7 C677.5 469.5 680.5 472.2 683.3 475.9 C686.1 479.6 689.2 484.9 690.7 488.9 C692.2 492.9 692.9 496.9 692.6 500.0 C692.3 503.1 689.5 506.2 688.9 507.5 C695.0 509.0 714.6 514.2 725.6 516.7 C736.6 519.2 750.2 521.8 755.1 522.8 C753.9 521.1 749.9 516.4 748.0 512.6 C746.1 508.8 743.8 503.6 743.5 500.0 C743.2 496.4 744.9 493.5 746.3 490.7 C747.7 487.9 751.0 484.5 751.9 483.3 C745.4 479.6 719.5 464.7 713.0 461.0 C702.7 459.6 661.3 454.2 651.0 452.8Z" fill="none"/>
<path d="M619.4 387.0 C619.5 379.9 620.5 372.9 622.2 366.7 C623.9 360.5 626.5 355.1 629.6 350.0 C632.7 344.9 636.4 340.1 640.7 336.1 C645.0 332.1 650.0 328.7 655.6 325.9 C661.2 323.1 667.9 320.9 674.1 319.4 C680.3 317.9 686.4 317.3 692.6 317.0 C698.8 316.7 704.9 316.9 711.1 317.6 C717.3 318.3 723.4 319.3 729.6 321.3 C735.8 323.3 742.5 326.5 748.1 329.6 C753.7 332.7 758.7 335.8 763.0 339.8 C767.3 343.8 771.3 348.6 774.1 353.7 C776.9 358.8 778.5 365.8 779.6 370.4 C780.7 375.0 780.7 377.5 780.6 381.5 C780.5 385.5 779.5 392.2 779.3 394.4 C780.0 396.3 781.4 401.3 783.3 405.6 C785.2 409.9 789.2 414.8 790.7 420.4 C792.2 425.9 792.8 432.7 792.6 438.9 C792.5 445.1 791.3 451.8 789.8 457.4 C788.2 462.9 785.9 467.7 783.3 472.2 C780.7 476.7 775.6 482.3 774.1 484.3 C771.9 484.4 764.5 485.4 761.1 485.2 C757.7 485.0 754.9 483.6 753.7 483.3 C753.4 483.3 752.2 483.3 751.9 483.3 C745.4 479.6 719.5 464.7 713.0 461.0 C702.7 459.6 661.3 454.2 651.0 452.8 C649.2 450.4 643.9 443.7 640.1 438.5 C636.3 433.3 631.1 426.6 628.0 421.7 C624.9 416.8 622.7 415.1 621.3 409.3 C619.9 403.5 619.2 394.1 619.4 387.0Z" fill="#f7d1d4" stroke="none"/>
<path d="M619.4 387.0 C619.5 379.9 620.5 372.9 622.2 366.7 C623.9 360.5 626.5 355.1 629.6 350.0 C632.7 344.9 636.4 340.1 640.7 336.1 C645.0 332.1 650.0 328.7 655.6 325.9 C661.2 323.1 667.9 320.9 674.1 319.4 C680.3 317.9 686.4 317.3 692.6 317.0 C698.8 316.7 704.9 316.9 711.1 317.6 C717.3 318.3 723.4 319.3 729.6 321.3 C735.8 323.3 742.5 326.5 748.1 329.6 C753.7 332.7 758.7 335.8 763.0 339.8 C767.3 343.8 771.3 348.6 774.1 353.7 C776.9 358.8 778.5 365.8 779.6 370.4 C780.7 375.0 780.7 377.5 780.6 381.5 C780.5 385.5 779.5 392.2 779.3 394.4 C780.0 396.3 781.4 401.3 783.3 405.6 C785.2 409.9 789.2 414.8 790.7 420.4 C792.2 425.9 792.8 432.7 792.6 438.9 C792.5 445.1 791.3 451.8 789.8 457.4 C788.2 462.9 785.9 467.7 783.3 472.2 C780.7 476.7 775.6 482.3 774.1 484.3 C771.9 484.4 764.5 485.4 761.1 485.2 C757.7 485.0 754.9 483.6 753.7 483.3 C753.4 483.3 752.2 483.3 751.9 483.3 C745.4 479.6 719.5 464.7 713.0 461.0 C702.7 459.6 661.3 454.2 651.0 452.8 C649.2 450.4 643.9 443.7 640.1 438.5 C636.3 433.3 631.1 426.6 628.0 421.7 C624.9 416.8 622.7 415.1 621.3 409.3 C619.9 403.5 619.2 394.1 619.4 387.0Z" fill="none" stroke="#203040" stroke-opacity="0.35" stroke-width="3.3"/>
<path d="M619.4 387.0 C619.5 379.9 620.5 372.9 622.2 366.7 C623.9 360.5 626.5 355.1 629.6 350.0 C632.7 344.9 636.4 340.1 640.7 336.1 C645.0 332.1 650.0 328.7 655.6 325.9 C661.2 323.1 667.9 320.9 674.1 319.4 C680.3 317.9 686.4 317.3 692.6 317.0 C698.8 316.7 704.9 316.9 711.1 317.6 C717.3 318.3 723.4 319.3 729.6 321.3 C735.8 323.3 742.5 326.5 748.1 329.6 C753.7 332.7 758.7 335.8 763.0 339.8 C767.3 343.8 771.3 348.6 774.1 353.7 C776.9 358.8 778.5 365.8 779.6 370.4 C780.7 375.0 780.7 377.5 780.6 381.5 C780.5 385.5 779.5 392.2 779.3 394.4 C780.0 396.3 781.4 401.3 783.3 405.6 C785.2 409.9 789.2 414.8 790.7 420.4 C792.2 425.9 792.8 432.7 792.6 438.9 C792.5 445.1 791.3 451.8 789.8 457.4 C788.2 462.9 785.9 467.7 783.3 472.2 C780.7 476.7 775.6 482.3 774.1 484.3 C771.9 484.4 764.5 485.4 761.1 485.2 C757.7 485.0 754.9 483.6 753.7 483.3 C753.4 483.3 752.2 483.3 751.9 483.3 C745.4 479.6 719.5 464.7 713.0 461.0 C702.7 459.6 661.3 454.2 651.0 452.8 C649.2 450.4 643.9 443.7 640.1 438.5 C636.3 433.3 631.1 426.6 628.0 421.7 C624.9 416.8 622.7 415.1 621.3 409.3 C619.9 403.5 619.2 394.1 619.4 387.0Z" fill="none"/>
<path d="M638.0 433.7 C650.2 433.6 698.8 433.1 711.0 433.0 C718.3 438.0 747.3 458.0 754.6 463.0 C754.1 466.4 752.4 479.9 751.9 483.3 C745.4 479.6 719.5 464.7 713.0 461.0 C702.7 459.6 661.3 454.2 651.0 452.8 C648.8 449.6 640.2 436.9 638.0 433.7Z" fill="none" stroke="#203040" stroke-opacity="0.35" stroke-width="3.3"/>
<path d="M638.0 433.7 C650.2 433.6 698.8 433.1 711.0 433.0 C718.3 438.0 747.3 458.0 754.6 463.0 C754.1 466.4 752.4 479.9 751.9 483.3 C745.4 479.6 719.5 464.7 713.0 461.0 C702.7 459.6 661.3 454.2 651.0 452.8 C648.8 449.6 640.2 436.9 638.0 433.7Z" fill="none"/>
<path d="M488.1 448.5 C490.7 447.0 496.2 446.9 499.3 447.0 C502.4 447.1 503.6 447.3 506.7 449.4 C509.8 451.5 513.8 455.7 517.8 459.6 C521.8 463.5 527.3 468.3 530.7 472.6 C534.1 476.9 535.3 478.5 538.1 485.6 C540.9 492.7 545.9 510.3 547.4 515.2 C549.2 515.3 556.6 515.5 558.5 515.6 C560.7 519.9 570.3 534.7 571.5 541.1 C572.7 547.5 569.3 549.7 565.9 554.0 C562.5 558.3 554.2 563.0 551.1 567.0 C548.0 571.0 548.9 570.1 547.4 578.1 C545.9 586.1 543.0 606.6 541.9 615.2 C540.8 623.9 540.6 621.2 540.5 630.0 C540.4 638.8 540.8 650.1 541.1 668.1 C541.4 686.1 542.1 726.3 542.3 737.9 C543.7 736.3 549.3 729.9 550.7 728.3 C550.5 726.3 548.9 718.5 549.5 716.3 C550.1 714.1 552.7 714.4 554.3 715.0 C555.9 715.6 558.3 719.1 559.1 719.9 C559.7 717.7 561.3 709.0 562.7 706.6 C564.1 704.2 565.8 703.4 567.6 705.4 C569.4 707.4 572.4 716.1 573.6 718.7 C574.8 721.3 574.6 720.6 574.8 721.0 C576.8 720.4 583.2 717.1 586.8 717.5 C590.4 717.9 594.4 720.9 596.4 723.5 C598.4 726.1 598.8 729.9 598.8 733.1 C598.8 736.3 595.2 740.5 596.4 742.7 C597.6 744.9 602.7 745.4 606.1 746.4 C609.5 747.4 614.5 746.6 616.9 748.8 C619.3 751.0 621.1 755.8 620.5 759.6 C619.9 763.4 612.9 768.4 613.3 771.6 C613.7 774.8 620.1 776.0 622.9 778.8 C625.7 781.6 629.5 785.1 630.1 788.5 C630.7 791.9 628.5 796.3 626.5 799.3 C624.5 802.3 619.2 804.8 618.1 806.5 C617.0 808.2 617.9 808.6 620.0 809.3 C622.1 810.0 628.1 809.8 630.5 810.6 C632.9 811.4 633.8 813.4 634.4 813.9 C633.1 814.3 629.8 815.4 626.6 816.5 C623.4 817.6 624.5 816.7 615.0 820.4 C605.5 824.1 585.8 832.8 569.6 838.5 C553.4 844.2 531.1 850.7 517.8 854.7 C504.5 858.8 497.6 860.9 490.0 862.8 C482.4 864.7 476.7 866.5 472.0 866.3 C467.3 866.1 464.8 864.0 462.0 861.5 C459.2 859.0 456.9 855.9 455.0 851.0 C453.1 846.1 451.8 838.6 450.5 832.0 C449.2 825.4 447.9 820.1 447.1 811.3 C446.3 802.4 445.6 789.9 445.8 778.9 C446.0 767.9 447.1 754.6 448.5 745.0 C449.9 735.4 450.6 733.1 454.4 721.1 C458.2 709.1 464.5 689.9 471.3 673.0 C478.1 656.1 489.8 632.7 495.4 620.0 C501.0 607.3 501.4 605.5 504.8 596.7 C508.2 587.9 513.7 575.0 515.9 567.0 C518.1 559.0 518.1 554.0 517.8 548.5 C517.5 543.0 517.8 543.3 514.1 533.7 C510.4 524.1 500.6 502.5 495.6 491.1 C490.7 479.7 486.4 471.1 484.4 465.2 C482.4 459.3 482.9 458.7 483.5 455.9 C484.1 453.1 485.5 450.0 488.1 448.5Z" fill="#89afd3" stroke="none"/>
<path d="M488.1 448.5 C490.7 447.0 496.2 446.9 499.3 447.0 C502.4 447.1 503.6 447.3 506.7 449.4 C509.8 451.5 513.8 455.7 517.8 459.6 C521.8 463.5 527.3 468.3 530.7 472.6 C534.1 476.9 535.3 478.5 538.1 485.6 C540.9 492.7 545.9 510.3 547.4 515.2 C549.2 515.3 556.6 515.5 558.5 515.6 C560.7 519.9 570.3 534.7 571.5 541.1 C572.7 547.5 569.3 549.7 565.9 554.0 C562.5 558.3 554.2 563.0 551.1 567.0 C548.0 571.0 548.9 570.1 547.4 578.1 C545.9 586.1 543.0 606.6 541.9 615.2 C540.8 623.9 540.6 621.2 540.5 630.0 C540.4 638.8 540.8 650.1 541.1 668.1 C541.4 686.1 542.1 726.3 542.3 737.9 C543.7 736.3 549.3 729.9 550.7 728.3 C550.5 726.3 548.9 718.5 549.5 716.3 C550.1 714.1 552.7 714.4 554.3 715.0 C555.9 715.6 558.3 719.1 559.1 719.9 C559.7 717.7 561.3 709.0 562.7 706.6 C564.1 704.2 565.8 703.4 567.6 705.4 C569.4 707.4 572.4 716.1 573.6 718.7 C574.8 721.3 574.6 720.6 574.8 721.0 C576.8 720.4 583.2 717.1 586.8 717.5 C590.4 717.9 594.4 720.9 596.4 723.5 C598.4 726.1 598.8 729.9 598.8 733.1 C598.8 736.3 595.2 740.5 596.4 742.7 C597.6 744.9 602.7 745.4 606.1 746.4 C609.5 747.4 614.5 746.6 616.9 748.8 C619.3 751.0 621.1 755.8 620.5 759.6 C619.9 763.4 612.9 768.4 613.3 771.6 C613.7 774.8 620.1 776.0 622.9 778.8 C625.7 781.6 629.5 785.1 630.1 788.5 C630.7 791.9 628.5 796.3 626.5 799.3 C624.5 802.3 619.2 804.8 618.1 806.5 C617.0 808.2 617.9 808.6 620.0 809.3 C622.1 810.0 628.1 809.8 630.5 810.6 C632.9 811.4 633.8 813.4 634.4 813.9 C633.1 814.3 629.8 815.4 626.6 816.5 C623.4 817.6 624.5 816.7 615.0 820.4 C605.5 824.1 585.8 832.8 569.6 838.5 C553.4 844.2 531.1 850.7 517.8 854.7 C504.5 858.8 497.6 860.9 490.0 862.8 C482.4 864.7 476.7 866.5 472.0 866.3 C467.3 866.1 464.8 864.0 462.0 861.5 C459.2 859.0 456.9 855.9 455.0 851.0 C453.1 846.1 451.8 838.6 450.5 832.0 C449.2 825.4 447.9 820.1 447.1 811.3 C446.3 802.4 445.6 789.9 445.8 778.9 C446.0 767.9 447.1 754.6 448.5 745.0 C449.9 735.4 450.6 733.1 454.4 721.1 C458.2 709.1 464.5 689.9 471.3 673.0 C478.1 656.1 489.8 632.7 495.4 620.0 C501.0 607.3 501.4 605.5 504.8 596.7 C508.2 587.9 513.7 575.0 515.9 567.0 C518.1 559.0 518.1 554.0 517.8 548.5 C517.5 543.0 517.8 543.3 514.1 533.7 C510.4 524.1 500.6 502.5 495.6 491.1 C490.7 479.7 486.4 471.1 484.4 465.2 C482.4 459.3 482.9 458.7 483.5 455.9 C484.1 453.1 485.5 450.0 488.1 448.5Z" fill="none" stroke="#203040" stroke-opacity="0.35" stroke-width="3.3"/>
<path d="M488.1 448.5 C490.7 447.0 496.2 446.9 499.3 447.0 C502.4 447.1 503.6 447.3 506.7 449.4 C509.8 451.5 513.8 455.7 517.8 459.6 C521.8 463.5 527.3 468.3 530.7 472.6 C534.1 476.9 535.3 478.5 538.1 485.6 C540.9 492.7 545.9 510.3 547.4 515.2 C549.2 515.3 556.6 515.5 558.5 515.6 C560.7 519.9 570.3 534.7 571.5 541.1 C572.7 547.5 569.3 549.7 565.9 554.0 C562.5 558.3 554.2 563.0 551.1 567.0 C548.0 571.0 548.9 570.1 547.4 578.1 C545.9 586.1 543.0 606.6 541.9 615.2 C540.8 623.9 540.6 621.2 540.5 630.0 C540.4 638.8 540.8 650.1 541.1 668.1 C541.4 686.1 542.1 726.3 542.3 737.9 C543.7 736.3 549.3 729.9 550.7 728.3 C550.5 726.3 548.9 718.5 549.5 716.3 C550.1 714.1 552.7 714.4 554.3 715.0 C555.9 715.6 558.3 719.1 559.1 719.9 C559.7 717.7 561.3 709.0 562.7 706.6 C564.1 704.2 565.8 703.4 567.6 705.4 C569.4 707.4 572.4 716.1 573.6 718.7 C574.8 721.3 574.6 720.6 574.8 721.0 C576.8 720.4 583.2 717.1 586.8 717.5 C590.4 717.9 594.4 720.9 596.4 723.5 C598.4 726.1 598.8 729.9 598.8 733.1 C598.8 736.3 595.2 740.5 596.4 742.7 C597.6 744.9 602.7 745.4 606.1 746.4 C609.5 747.4 614.5 746.6 616.9 748.8 C619.3 751.0 621.1 755.8 620.5 759.6 C619.9 763.4 612.9 768.4 613.3 771.6 C613.7 774.8 620.1 776.0 622.9 778.8 C625.7 781.6 629.5 785.1 630.1 788.5 C630.7 791.9 628.5 796.3 626.5 799.3 C624.5 802.3 619.2 804.8 618.1 806.5 C617.0 808.2 617.9 808.6 620.0 809.3 C622.1 810.0 628.1 809.8 630.5 810.6 C632.9 811.4 633.8 813.4 634.4 813.9 C633.1 814.3 629.8 815.4 626.6 816.5 C623.4 817.6 624.5 816.7 615.0 820.4 C605.5 824.1 585.8 832.8 569.6 838.5 C553.4 844.2 531.1 850.7 517.8 854.7 C504.5 858.8 497.6 860.9 490.0 862.8 C482.4 864.7 476.7 866.5 472.0 866.3 C467.3 866.1 464.8 864.0 462.0 861.5 C459.2 859.0 456.9 855.9 455.0 851.0 C453.1 846.1 451.8 838.6 450.5 832.0 C449.2 825.4 447.9 820.1 447.1 811.3 C446.3 802.4 445.6 789.9 445.8 778.9 C446.0 767.9 447.1 754.6 448.5 745.0 C449.9 735.4 450.6 733.1 454.4 721.1 C458.2 709.1 464.5 689.9 471.3 673.0 C478.1 656.1 489.8 632.7 495.4 620.0 C501.0 607.3 501.4 605.5 504.8 596.7 C508.2 587.9 513.7 575.0 515.9 567.0 C518.1 559.0 518.1 554.0 517.8 548.5 C517.5 543.0 517.8 543.3 514.1 533.7 C510.4 524.1 500.6 502.5 495.6 491.1 C490.7 479.7 486.4 471.1 484.4 465.2 C482.4 459.3 482.9 458.7 483.5 455.9 C484.1 453.1 485.5 450.0 488.1 448.5Z" fill="none"/>
<path d="M574.8 721.0 C579.2 735.5 596.9 793.2 601.3 807.7 C604.1 807.9 615.3 808.7 618.1 808.9" fill="none" stroke="#203040" stroke-opacity="0.35" stroke-width="3.3"/>
<path d="M574.8 721.0 C579.2 735.5 596.9 793.2 601.3 807.7 C604.1 807.9 615.3 808.7 618.1 808.9" fill="none"/>
<path d="M893.1 472.0 C897.3 472.8 903.1 478.0 905.8 482.4 C908.5 486.8 909.7 492.8 909.3 498.6 C908.9 504.4 908.3 506.3 903.5 517.1 C898.7 527.9 885.4 553.0 880.4 563.4 C875.4 573.8 874.9 571.5 873.4 579.6 C871.9 587.7 871.9 601.6 871.1 612.0 C870.3 622.4 869.0 629.1 868.8 642.1 C868.6 655.1 870.2 672.0 870.0 690.0 C869.8 708.0 868.8 732.5 867.5 750.0 C866.2 767.5 863.8 783.0 862.0 795.0 C860.2 807.0 858.7 812.2 856.6 822.2 C854.5 832.2 851.8 845.3 849.4 854.7 C847.0 864.1 844.4 873.3 842.2 878.8 C840.1 884.3 838.5 885.3 836.5 887.5 C834.5 889.7 833.7 890.4 830.0 892.0 C826.3 893.6 819.7 895.8 814.5 896.9 C809.3 898.0 802.4 898.9 798.8 898.7 C795.2 898.5 797.4 899.2 793.0 895.5 C788.6 891.8 779.8 884.8 772.3 876.4 C764.8 868.0 756.2 857.1 748.2 845.0 C740.2 832.9 729.1 811.1 724.1 803.5 C719.1 795.9 720.0 800.6 718.0 799.3 C716.0 798.0 713.4 797.0 712.0 795.5 C710.6 794.0 709.8 791.7 709.8 790.0 C709.8 788.3 710.7 786.3 712.0 785.3 C713.3 784.3 715.1 783.9 717.5 783.8 C719.9 783.7 724.8 784.4 726.3 784.5 C725.5 781.7 721.1 772.2 721.3 767.5 C721.5 762.8 724.4 757.8 727.5 756.3 C730.6 754.8 736.5 759.4 740.0 758.8 C743.5 758.2 747.5 755.2 748.8 752.5 C750.0 749.8 747.7 745.8 747.5 742.5 C747.3 739.2 745.6 735.6 747.5 732.5 C749.4 729.4 754.6 723.6 758.8 723.8 C763.0 724.0 770.2 732.1 772.5 733.8 C773.3 732.8 775.4 730.9 777.5 727.5 C779.6 724.1 782.5 715.5 785.0 713.5 C787.5 711.5 790.2 713.5 792.5 715.5 C794.8 717.5 797.6 724.0 798.6 725.7 C799.9 722.6 805.0 710.1 806.3 707.0 C806.6 710.0 808.0 722.0 808.3 725.0 C808.1 721.3 807.2 706.7 807.0 703.0 C809.2 698.3 816.0 685.5 820.0 675.0 C824.0 664.5 828.9 648.2 831.3 640.0 C833.6 631.8 832.3 633.6 834.1 625.9 C835.9 618.1 840.9 602.0 842.2 593.5 C843.6 585.0 843.0 580.8 842.2 575.0 C841.4 569.2 837.9 564.2 837.5 558.8 C837.1 553.4 837.4 548.8 839.9 542.6 C842.4 536.4 847.8 529.5 852.6 521.8 C857.4 514.1 864.2 503.6 868.8 496.3 C873.4 489.0 876.3 481.9 880.4 477.8 C884.5 473.8 888.9 471.2 893.1 472.0Z" fill="#89afd3" stroke="none"/>
<path d="M893.1 472.0 C897.3 472.8 903.1 478.0 905.8 482.4 C908.5 486.8 909.7 492.8 909.3 498.6 C908.9 504.4 908.3 506.3 903.5 517.1 C898.7 527.9 885.4 553.0 880.4 563.4 C875.4 573.8 874.9 571.5 873.4 579.6 C871.9 587.7 871.9 601.6 871.1 612.0 C870.3 622.4 869.0 629.1 868.8 642.1 C868.6 655.1 870.2 672.0 870.0 690.0 C869.8 708.0 868.8 732.5 867.5 750.0 C866.2 767.5 863.8 783.0 862.0 795.0 C860.2 807.0 858.7 812.2 856.6 822.2 C854.5 832.2 851.8 845.3 849.4 854.7 C847.0 864.1 844.4 873.3 842.2 878.8 C840.1 884.3 838.5 885.3 836.5 887.5 C834.5 889.7 833.7 890.4 830.0 892.0 C826.3 893.6 819.7 895.8 814.5 896.9 C809.3 898.0 802.4 898.9 798.8 898.7 C795.2 898.5 797.4 899.2 793.0 895.5 C788.6 891.8 779.8 884.8 772.3 876.4 C764.8 868.0 756.2 857.1 748.2 845.0 C740.2 832.9 729.1 811.1 724.1 803.5 C719.1 795.9 720.0 800.6 718.0 799.3 C716.0 798.0 713.4 797.0 712.0 795.5 C710.6 794.0 709.8 791.7 709.8 790.0 C709.8 788.3 710.7 786.3 712.0 785.3 C713.3 784.3 715.1 783.9 717.5 783.8 C719.9 783.7 724.8 784.4 726.3 784.5 C725.5 781.7 721.1 772.2 721.3 767.5 C721.5 762.8 724.4 757.8 727.5 756.3 C730.6 754.8 736.5 759.4 740.0 758.8 C743.5 758.2 747.5 755.2 748.8 752.5 C750.0 749.8 747.7 745.8 747.5 742.5 C747.3 739.2 745.6 735.6 747.5 732.5 C749.4 729.4 754.6 723.6 758.8 723.8 C763.0 724.0 770.2 732.1 772.5 733.8 C773.3 732.8 775.4 730.9 777.5 727.5 C779.6 724.1 782.5 715.5 785.0 713.5 C787.5 711.5 790.2 713.5 792.5 715.5 C794.8 717.5 797.6 724.0 798.6 725.7 C799.9 722.6 805.0 710.1 806.3 707.0 C806.6 710.0 808.0 722.0 808.3 725.0 C808.1 721.3 807.2 706.7 807.0 703.0 C809.2 698.3 816.0 685.5 820.0 675.0 C824.0 664.5 828.9 648.2 831.3 640.0 C833.6 631.8 832.3 633.6 834.1 625.9 C835.9 618.1 840.9 602.0 842.2 593.5 C843.6 585.0 843.0 580.8 842.2 575.0 C841.4 569.2 837.9 564.2 837.5 558.8 C837.1 553.4 837.4 548.8 839.9 542.6 C842.4 536.4 847.8 529.5 852.6 521.8 C857.4 514.1 864.2 503.6 868.8 496.3 C873.4 489.0 876.3 481.9 880.4 477.8 C884.5 473.8 888.9 471.2 893.1 472.0Z" fill="none" stroke="#203040" stroke-opacity="0.35" stroke-width="3.3"/>
<path d="M893.1 472.0 C897.3 472.8 903.1 478.0 905.8 482.4 C908.5 486.8 909.7 492.8 909.3 498.6 C908.9 504.4 908.3 506.3 903.5 517.1 C898.7 527.9 885.4 553.0 880.4 563.4 C875.4 573.8 874.9 571.5 873.4 579.6 C871.9 587.7 871.9 601.6 871.1 612.0 C870.3 622.4 869.0 629.1 868.8 642.1 C868.6 655.1 870.2 672.0 870.0 690.0 C869.8 708.0 868.8 732.5 867.5 750.0 C866.2 767.5 863.8 783.0 862.0 795.0 C860.2 807.0 858.7 812.2 856.6 822.2 C854.5 832.2 851.8 845.3 849.4 854.7 C847.0 864.1 844.4 873.3 842.2 878.8 C840.1 884.3 838.5 885.3 836.5 887.5 C834.5 889.7 833.7 890.4 830.0 892.0 C826.3 893.6 819.7 895.8 814.5 896.9 C809.3 898.0 802.4 898.9 798.8 898.7 C795.2 898.5 797.4 899.2 793.0 895.5 C788.6 891.8 779.8 884.8 772.3 876.4 C764.8 868.0 756.2 857.1 748.2 845.0 C740.2 832.9 729.1 811.1 724.1 803.5 C719.1 795.9 720.0 800.6 718.0 799.3 C716.0 798.0 713.4 797.0 712.0 795.5 C710.6 794.0 709.8 791.7 709.8 790.0 C709.8 788.3 710.7 786.3 712.0 785.3 C713.3 784.3 715.1 783.9 717.5 783.8 C719.9 783.7 724.8 784.4 726.3 784.5 C725.5 781.7 721.1 772.2 721.3 767.5 C721.5 762.8 724.4 757.8 727.5 756.3 C730.6 754.8 736.5 759.4 740.0 758.8 C743.5 758.2 747.5 755.2 748.8 752.5 C750.0 749.8 747.7 745.8 747.5 742.5 C747.3 739.2 745.6 735.6 747.5 732.5 C749.4 729.4 754.6 723.6 758.8 723.8 C763.0 724.0 770.2 732.1 772.5 733.8 C773.3 732.8 775.4 730.9 777.5 727.5 C779.6 724.1 782.5 715.5 785.0 713.5 C787.5 711.5 790.2 713.5 792.5 715.5 C794.8 717.5 797.6 724.0 798.6 725.7 C799.9 722.6 805.0 710.1 806.3 707.0 C806.6 710.0 808.0 722.0 808.3 725.0 C808.1 721.3 807.2 706.7 807.0 703.0 C809.2 698.3 816.0 685.5 820.0 675.0 C824.0 664.5 828.9 648.2 831.3 640.0 C833.6 631.8 832.3 633.6 834.1 625.9 C835.9 618.1 840.9 602.0 842.2 593.5 C843.6 585.0 843.0 580.8 842.2 575.0 C841.4 569.2 837.9 564.2 837.5 558.8 C837.1 553.4 837.4 548.8 839.9 542.6 C842.4 536.4 847.8 529.5 852.6 521.8 C857.4 514.1 864.2 503.6 868.8 496.3 C873.4 489.0 876.3 481.9 880.4 477.8 C884.5 473.8 888.9 471.2 893.1 472.0Z" fill="none"/>
<path d="M726.4 784.0 C728.4 784.5 736.2 786.3 738.2 786.8 C749.9 776.5 796.6 735.3 808.3 725.0" fill="none" stroke="#203040" stroke-opacity="0.35" stroke-width="3.3"/>
<path d="M726.4 784.0 C728.4 784.5 736.2 786.3 738.2 786.8 C749.9 776.5 796.6 735.3 808.3 725.0" fill="none"/>
<path d="M871.1 612.0 C869.4 614.9 862.4 626.5 860.7 629.4 C862.1 631.5 867.4 640.0 868.8 642.1" fill="none" stroke="#203040" stroke-opacity="0.35" stroke-width="3.3"/>
<path d="M871.1 612.0 C869.4 614.9 862.4 626.5 860.7 629.4 C862.1 631.5 867.4 640.0 868.8 642.1" fill="none"/>
</g></svg>
<div style="position:absolute;left:38px;top:1060px;width:1556px;height:21px;background:#2b2b2b;border:1px solid #383838;border-radius:3px;box-sizing:border-box"></div>
<div style="position:absolute;left:40px;top:1062px;width:1552px;height:16px;background:#424242"></div>
<div style="position:absolute;left:40px;top:1062px;width:55px;height:16px;background:#535353"></div>
<div style="position:absolute;left:46px;top:1064px;font-size:10px;line-height:12px;color:#f0f0f0;font-weight:bold;white-space:nowrap;">Timeline</div>
<svg style="position:absolute;left:1578px;top:1066px;" width="10" height="7" viewBox="0 0 10 7"><rect x="0" y="0" width="10" height="1" fill="#d4d4d4"/><rect x="0" y="2" width="10" height="1" fill="#d4d4d4"/><rect x="0" y="4" width="10" height="1" fill="#d4d4d4"/><rect x="0" y="6" width="10" height="1" fill="#d4d4d4"/></svg>
<div style="position:absolute;left:1594px;top:60px;width:40px;height:1020px;background:#282828"></div>
<div style="position:absolute;left:1594px;top:60px;width:326px;height:11px;background:#424242"></div>
<svg style="position:absolute;left:1619px;top:62px;" width="10" height="7" viewBox="0 0 10 7"><path d="M4.5 0.5 L0.5 3.5 L4.5 6.5 L3 3.5Z M9 0.5 L5 3.5 L9 6.5 L7.5 3.5Z" fill="#d0d0d0"/></svg>
<svg style="position:absolute;left:1905px;top:62px;" width="10" height="7" viewBox="0 0 10 7"><path d="M0.5 0.5 L4.5 3.5 L0.5 6.5 L2 3.5Z M5 0.5 L9 3.5 L5 6.5 L6.5 3.5Z" fill="#d0d0d0"/></svg>
<div style="position:absolute;left:1632px;top:72px;width:3px;height:207px;background:#474747;border-left:1px solid #3a3a3a;border-right:1px solid #3a3a3a;box-sizing:border-box"></div>
<div style="position:absolute;left:1595px;top:72px;width:37px;height:68px;background:#535353"></div>
<div style="position:absolute;left:1595px;top:141px;width:37px;height:68px;background:#535353"></div>
<div style="position:absolute;left:1595px;top:210px;width:37px;height:68px;background:#535353"></div>
<svg style="position:absolute;left:1604px;top:75px;" width="20" height="3" viewBox="0 0 20 3"><rect x="0" y="0" width="1" height="3" fill="#3e3e3e"/><rect x="2" y="0" width="1" height="3" fill="#3e3e3e"/><rect x="4" y="0" width="1" height="3" fill="#3e3e3e"/><rect x="6" y="0" width="1" height="3" fill="#3e3e3e"/><rect x="8" y="0" width="1" height="3" fill="#3e3e3e"/><rect x="10" y="0" width="1" height="3" fill="#3e3e3e"/><rect x="12" y="0" width="1" height="3" fill="#3e3e3e"/><rect x="14" y="0" width="1" height="3" fill="#3e3e3e"/><rect x="16" y="0" width="1" height="3" fill="#3e3e3e"/><rect x="18" y="0" width="1" height="3" fill="#3e3e3e"/></svg>
<svg style="position:absolute;left:1604px;top:144px;" width="20" height="3" viewBox="0 0 20 3"><rect x="0" y="0" width="1" height="3" fill="#3e3e3e"/><rect x="2" y="0" width="1" height="3" fill="#3e3e3e"/><rect x="4" y="0" width="1" height="3" fill="#3e3e3e"/><rect x="6" y="0" width="1" height="3" fill="#3e3e3e"/><rect x="8" y="0" width="1" height="3" fill="#3e3e3e"/><rect x="10" y="0" width="1" height="3" fill="#3e3e3e"/><rect x="12" y="0" width="1" height="3" fill="#3e3e3e"/><rect x="14" y="0" width="1" height="3" fill="#3e3e3e"/><rect x="16" y="0" width="1" height="3" fill="#3e3e3e"/><rect x="18" y="0" width="1" height="3" fill="#3e3e3e"/></svg>
<svg style="position:absolute;left:1604px;top:213px;" width="20" height="3" viewBox="0 0 20 3"><rect x="0" y="0" width="1" height="3" fill="#3e3e3e"/><rect x="2" y="0" width="1" height="3" fill="#3e3e3e"/><rect x="4" y="0" width="1" height="3" fill="#3e3e3e"/><rect x="6" y="0" width="1" height="3" fill="#3e3e3e"/><rect x="8" y="0" width="1" height="3" fill="#3e3e3e"/><rect x="10" y="0" width="1" height="3" fill="#3e3e3e"/><rect x="12" y="0" width="1" height="3" fill="#3e3e3e"/><rect x="14" y="0" width="1" height="3" fill="#3e3e3e"/><rect x="16" y="0" width="1" height="3" fill="#3e3e3e"/><rect x="18" y="0" width="1" height="3" fill="#3e3e3e"/></svg>
<svg style="position:absolute;left:1596px;top:80px;" width="36" height="56" viewBox="0 0 36 56"><g fill="#dcdcdc"><rect x="8" y="7" width="2" height="2"/><rect x="8" y="10" width="2" height="2"/><rect x="8" y="13" width="2" height="2"/><rect x="11" y="7" width="4.5" height="1.3"/><rect x="11" y="10" width="4.5" height="1.3"/><rect x="11" y="13" width="4.5" height="1.3"/><path d="M28.3 9 L29 9.8 L21.2 17.2 L19.2 15.4Z"/><path d="M16.6 17.2 C14.8 18.4 14.5 20.5 12 22.6 C15 23.5 18.5 22.5 19.8 20.2 C20.3 19 19.8 17.5 18.7 17 C18 16.7 17.3 16.8 16.6 17.2Z"/><path d="M7.8 37.9 C9 36.4 11 35.8 13.2 36.2 C14.3 36.5 14.8 37.5 14.8 38.6 C14.8 39.8 14.2 40.8 13 41 C11 41.3 9 40 7.8 37.9Z"/><rect x="18" y="38" width="10" height="2"/><rect x="10.4" y="46" width="9.6" height="2"/><path d="M21 47 L25.7 42 C27.3 43.5 28 45.2 28 47 C28 48.8 27.3 50.5 25.7 52Z"/></g></svg>
<div style="position:absolute;left:1608px;top:156px;font-size:16px;line-height:18px;color:#dcdcdc;font-weight:normal;white-space:nowrap;">A</div>
<div style="position:absolute;left:1621px;top:157px;width:1px;height:15px;background:#dcdcdc"></div>
<svg style="position:absolute;left:1608px;top:185px;" width="13" height="16" viewBox="0 0 13 16"><path d="M5.5 0.5 H12.5 V2 H11.3 V15.5 H9.8 V2 H8.2 V15.5 H6.7 V8.5 H5.5 C2.8 8.5 1 6.8 1 4.5 C1 2.2 2.8 0.5 5.5 0.5Z" fill="#dcdcdc"/></svg>
<svg style="position:absolute;left:1607px;top:225px;" width="15" height="17" viewBox="0 0 15 17"><rect x="1" y="1" width="13" height="15" fill="#dcdcdc"/><rect x="3" y="3" width="5" height="1" fill="#535353"/><rect x="3" y="5" width="5" height="1" fill="#535353"/><rect x="3" y="7" width="5" height="1" fill="#535353"/><rect x="9" y="3" width="4" height="5" fill="#535353"/><rect x="3" y="10" width="10" height="3" fill="#535353"/></svg>
<svg style="position:absolute;left:1607px;top:253px;" width="15" height="17" viewBox="0 0 15 17"><path d="M1 1 H14 V11 L10 16 H1Z" fill="#dcdcdc"/><rect x="3" y="3" width="9" height="1" fill="#535353"/><rect x="3" y="5" width="9" height="1" fill="#535353"/><rect x="3" y="7" width="9" height="1" fill="#535353"/><rect x="3" y="9" width="6" height="1" fill="#535353"/><path d="M10 16 L14 11 H10Z" fill="#535353"/></svg>
<div style="position:absolute;left:1635px;top:72px;width:284px;height:18px;background:#424242"></div>
<div style="position:absolute;left:1635px;top:72px;width:63px;height:18px;background:#535353"></div>
<div style="position:absolute;left:1642px;top:75px;font-size:9.5px;line-height:11.5px;color:#f0f0f0;font-weight:bold;white-space:nowrap;">Properties</div>
<div style="position:absolute;left:1705px;top:75px;font-size:9.5px;line-height:11.5px;color:#a9a9a9;font-weight:bold;white-space:nowrap;">Adjustments</div>
<div style="position:absolute;left:1698px;top:72px;width:1px;height:18px;background:#3b3b3b"></div>
<div style="position:absolute;left:1772px;top:72px;width:1px;height:18px;background:#3b3b3b"></div>
<div style="position:absolute;left:1635px;top:90px;width:284px;height:3px;background:#474747;border-top:1px solid #3a3a3a;border-bottom:1px solid #3a3a3a;box-sizing:border-box"></div>
<div style="position:absolute;left:1635px;top:93px;width:284px;height:17px;background:#424242"></div>
<div style="position:absolute;left:1635px;top:93px;width:50px;height:17px;background:#535353"></div>
<div style="position:absolute;left:1642px;top:96px;font-size:9.5px;line-height:11.5px;color:#f0f0f0;font-weight:bold;white-space:nowrap;">History</div>
<div style="position:absolute;left:1691px;top:96px;font-size:9.5px;line-height:11.5px;color:#a9a9a9;font-weight:bold;white-space:nowrap;">Actions</div>
<div style="position:absolute;left:1736px;top:93px;width:1px;height:17px;background:#3b3b3b"></div>
<svg style="position:absolute;left:1903px;top:77px;" width="10" height="7" viewBox="0 0 10 7"><rect x="0" y="0" width="10" height="1" fill="#d4d4d4"/><rect x="0" y="2" width="10" height="1" fill="#d4d4d4"/><rect x="0" y="4" width="10" height="1" fill="#d4d4d4"/><rect x="0" y="6" width="10" height="1" fill="#d4d4d4"/></svg>
<svg style="position:absolute;left:1903px;top:98px;" width="10" height="7" viewBox="0 0 10 7"><rect x="0" y="0" width="10" height="1" fill="#d4d4d4"/><rect x="0" y="2" width="10" height="1" fill="#d4d4d4"/><rect x="0" y="4" width="10" height="1" fill="#d4d4d4"/><rect x="0" y="6" width="10" height="1" fill="#d4d4d4"/></svg>
<div style="position:absolute;left:1635px;top:110px;width:284px;height:356px;background:#535353"></div>
<div style="position:absolute;left:1903px;top:115px;width:16px;height:351px;background:#494949"></div>
<div style="position:absolute;left:1905px;top:130px;width:12px;height:330px;background:#494949"></div>
<div style="position:absolute;left:1905px;top:356px;width:12px;height:94px;background:#686868"></div>
<svg style="position:absolute;left:1906px;top:120px;" width="10" height="6" viewBox="0 0 10 6"><path d="M1 5 L5 1 L9 5" stroke="#8a8a8a" fill="none" stroke-width="1.2"/></svg>
<svg style="position:absolute;left:1906px;top:451px;" width="10" height="6" viewBox="0 0 10 6"><path d="M1 1 L5 5 L9 1" stroke="#8a8a8a" fill="none" stroke-width="1.2"/></svg>
<div style="position:absolute;left:1635px;top:120px;width:267px;height:1px;background:#464646"></div>
<svg style="position:absolute;left:1640px;top:114px;" width="50" height="5" viewBox="0 0 50 5"><rect x="1" y="1" width="12" height="1" fill="#6a6a6a"/><path d="M27.75 0 V3.25 H41.25 V0" fill="none" stroke="#e0e0e0" stroke-width="1.5"/></svg>
<div style="position:absolute;left:1641px;top:127px;width:12px;height:12px;border:1px solid #464646;box-sizing:border-box;border-right-color:#6a6a6a;border-bottom-color:#6a6a6a"></div>
<svg style="position:absolute;left:1667px;top:126px;" width="15" height="16" viewBox="0 0 15 16"><path d="M0.75 15.25 V0.75 H9 V2.75 H14.25 V15.25 Z" fill="#474747" stroke="#e0e0e0" stroke-width="1.5"/><rect x="0" y="0" width="9.75" height="2.75" fill="#e0e0e0"/><rect x="2.5" y="5" width="9.5" height="1.1" fill="#e0e0e0"/><rect x="2.5" y="7" width="9.5" height="1.1" fill="#e0e0e0"/><rect x="2.5" y="9" width="9.5" height="1.1" fill="#e0e0e0"/><rect x="2.5" y="11" width="9.5" height="1.1" fill="#e0e0e0"/></svg>
<div style="position:absolute;left:1693px;top:126px;font-size:10px;line-height:12px;color:#e6e6e6;font-weight:normal;white-space:nowrap;">Nudge Path</div>
<div style="position:absolute;left:1635px;top:143px;width:267px;height:1px;background:#464646"></div>
<div style="position:absolute;left:1641px;top:150px;width:12px;height:12px;border:1px solid #464646;box-sizing:border-box;border-right-color:#6a6a6a;border-bottom-color:#6a6a6a"></div>
<svg style="position:absolute;left:1667px;top:149px;" width="15" height="16" viewBox="0 0 15 16"><path d="M0.75 15.25 V0.75 H9 V2.75 H14.25 V15.25 Z" fill="#474747" stroke="#e0e0e0" stroke-width="1.5"/><rect x="0" y="0" width="9.75" height="2.75" fill="#e0e0e0"/><rect x="2.5" y="5" width="9.5" height="1.1" fill="#e0e0e0"/><rect x="2.5" y="7" width="9.5" height="1.1" fill="#e0e0e0"/><rect x="2.5" y="9" width="9.5" height="1.1" fill="#e0e0e0"/><rect x="2.5" y="11" width="9.5" height="1.1" fill="#e0e0e0"/></svg>
<div style="position:absolute;left:1693px;top:149px;font-size:10px;line-height:12px;color:#e6e6e6;font-weight:normal;white-space:nowrap;">Nudge Path</div>
<div style="position:absolute;left:1635px;top:166px;width:267px;height:1px;background:#464646"></div>
<div style="position:absolute;left:1641px;top:173px;width:12px;height:12px;border:1px solid #464646;box-sizing:border-box;border-right-color:#6a6a6a;border-bottom-color:#6a6a6a"></div>
<svg style="position:absolute;left:1667px;top:172px;" width="15" height="16" viewBox="0 0 15 16"><path d="M0.75 15.25 V0.75 H9 V2.75 H14.25 V15.25 Z" fill="#474747" stroke="#e0e0e0" stroke-width="1.5"/><rect x="0" y="0" width="9.75" height="2.75" fill="#e0e0e0"/><rect x="2.5" y="5" width="9.5" height="1.1" fill="#e0e0e0"/><rect x="2.5" y="7" width="9.5" height="1.1" fill="#e0e0e0"/><rect x="2.5" y="9" width="9.5" height="1.1" fill="#e0e0e0"/><rect x="2.5" y="11" width="9.5" height="1.1" fill="#e0e0e0"/></svg>
<div style="position:absolute;left:1693px;top:172px;font-size:10px;line-height:12px;color:#e6e6e6;font-weight:normal;white-space:nowrap;">Change Anchor Point</div>
<div style="position:absolute;left:1635px;top:189px;width:267px;height:1px;background:#464646"></div>
<div style="position:absolute;left:1641px;top:196px;width:12px;height:12px;border:1px solid #464646;box-sizing:border-box;border-right-color:#6a6a6a;border-bottom-color:#6a6a6a"></div>
<svg style="position:absolute;left:1667px;top:195px;" width="15" height="16" viewBox="0 0 15 16"><path d="M0.75 15.25 V0.75 H9 V2.75 H14.25 V15.25 Z" fill="#474747" stroke="#e0e0e0" stroke-width="1.5"/><rect x="0" y="0" width="9.75" height="2.75" fill="#e0e0e0"/><rect x="2.5" y="5" width="9.5" height="1.1" fill="#e0e0e0"/><rect x="2.5" y="7" width="9.5" height="1.1" fill="#e0e0e0"/><rect x="2.5" y="9" width="9.5" height="1.1" fill="#e0e0e0"/><rect x="2.5" y="11" width="9.5" height="1.1" fill="#e0e0e0"/></svg>
<div style="position:absolute;left:1693px;top:195px;font-size:10px;line-height:12px;color:#e6e6e6;font-weight:normal;white-space:nowrap;">Drag Control Point</div>
<div style="position:absolute;left:1635px;top:212px;width:267px;height:1px;background:#464646"></div>
<div style="position:absolute;left:1641px;top:219px;width:12px;height:12px;border:1px solid #464646;box-sizing:border-box;border-right-color:#6a6a6a;border-bottom-color:#6a6a6a"></div>
<svg style="position:absolute;left:1667px;top:218px;" width="15" height="16" viewBox="0 0 15 16"><path d="M0.75 15.25 V0.75 H9 V2.75 H14.25 V15.25 Z" fill="#474747" stroke="#e0e0e0" stroke-width="1.5"/><rect x="0" y="0" width="9.75" height="2.75" fill="#e0e0e0"/><rect x="2.5" y="5" width="9.5" height="1.1" fill="#e0e0e0"/><rect x="2.5" y="7" width="9.5" height="1.1" fill="#e0e0e0"/><rect x="2.5" y="9" width="9.5" height="1.1" fill="#e0e0e0"/><rect x="2.5" y="11" width="9.5" height="1.1" fill="#e0e0e0"/></svg>
<div style="position:absolute;left:1693px;top:218px;font-size:10px;line-height:12px;color:#e6e6e6;font-weight:normal;white-space:nowrap;">Nudge Path</div>
<div style="position:absolute;left:1635px;top:235px;width:267px;height:1px;background:#464646"></div>
<div style="position:absolute;left:1641px;top:242px;width:12px;height:12px;border:1px solid #464646;box-sizing:border-box;border-right-color:#6a6a6a;border-bottom-color:#6a6a6a"></div>
<svg style="position:absolute;left:1667px;top:241px;" width="15" height="16" viewBox="0 0 15 16"><path d="M0.75 15.25 V0.75 H9 V2.75 H14.25 V15.25 Z" fill="#474747" stroke="#e0e0e0" stroke-width="1.5"/><rect x="0" y="0" width="9.75" height="2.75" fill="#e0e0e0"/><rect x="2.5" y="5" width="9.5" height="1.1" fill="#e0e0e0"/><rect x="2.5" y="7" width="9.5" height="1.1" fill="#e0e0e0"/><rect x="2.5" y="9" width="9.5" height="1.1" fill="#e0e0e0"/><rect x="2.5" y="11" width="9.5" height="1.1" fill="#e0e0e0"/></svg>
<div style="position:absolute;left:1693px;top:241px;font-size:10px;line-height:12px;color:#e6e6e6;font-weight:normal;white-space:nowrap;">Nudge Path</div>
<div style="position:absolute;left:1635px;top:258px;width:267px;height:1px;background:#464646"></div>
<div style="position:absolute;left:1641px;top:265px;width:12px;height:12px;border:1px solid #464646;box-sizing:border-box;border-right-color:#6a6a6a;border-bottom-color:#6a6a6a"></div>
<svg style="position:absolute;left:1667px;top:264px;" width="15" height="16" viewBox="0 0 15 16"><path d="M0.75 15.25 V0.75 H9 V2.75 H14.25 V15.25 Z" fill="#474747" stroke="#e0e0e0" stroke-width="1.5"/><rect x="0" y="0" width="9.75" height="2.75" fill="#e0e0e0"/><rect x="2.5" y="5" width="9.5" height="1.1" fill="#e0e0e0"/><rect x="2.5" y="7" width="9.5" height="1.1" fill="#e0e0e0"/><rect x="2.5" y="9" width="9.5" height="1.1" fill="#e0e0e0"/><rect x="2.5" y="11" width="9.5" height="1.1" fill="#e0e0e0"/></svg>
<div style="position:absolute;left:1693px;top:264px;font-size:10px;line-height:12px;color:#e6e6e6;font-weight:normal;white-space:nowrap;">Nudge Path</div>
<div style="position:absolute;left:1635px;top:281px;width:267px;height:1px;background:#464646"></div>
<div style="position:absolute;left:1641px;top:288px;width:12px;height:12px;border:1px solid #464646;box-sizing:border-box;border-right-color:#6a6a6a;border-bottom-color:#6a6a6a"></div>
<svg style="position:absolute;left:1667px;top:287px;" width="15" height="16" viewBox="0 0 15 16"><path d="M0.75 15.25 V0.75 H9 V2.75 H14.25 V15.25 Z" fill="#474747" stroke="#e0e0e0" stroke-width="1.5"/><rect x="0" y="0" width="9.75" height="2.75" fill="#e0e0e0"/><rect x="2.5" y="5" width="9.5" height="1.1" fill="#e0e0e0"/><rect x="2.5" y="7" width="9.5" height="1.1" fill="#e0e0e0"/><rect x="2.5" y="9" width="9.5" height="1.1" fill="#e0e0e0"/><rect x="2.5" y="11" width="9.5" height="1.1" fill="#e0e0e0"/></svg>
<div style="position:absolute;left:1693px;top:287px;font-size:10px;line-height:12px;color:#e6e6e6;font-weight:normal;white-space:nowrap;">Nudge Path</div>
<div style="position:absolute;left:1635px;top:304px;width:267px;height:1px;background:#464646"></div>
<div style="position:absolute;left:1641px;top:311px;width:12px;height:12px;border:1px solid #464646;box-sizing:border-box;border-right-color:#6a6a6a;border-bottom-color:#6a6a6a"></div>
<svg style="position:absolute;left:1667px;top:310px;" width="15" height="16" viewBox="0 0 15 16"><path d="M0.75 15.25 V0.75 H9 V2.75 H14.25 V15.25 Z" fill="#474747" stroke="#e0e0e0" stroke-width="1.5"/><rect x="0" y="0" width="9.75" height="2.75" fill="#e0e0e0"/><rect x="2.5" y="5" width="9.5" height="1.1" fill="#e0e0e0"/><rect x="2.5" y="7" width="9.5" height="1.1" fill="#e0e0e0"/><rect x="2.5" y="9" width="9.5" height="1.1" fill="#e0e0e0"/><rect x="2.5" y="11" width="9.5" height="1.1" fill="#e0e0e0"/></svg>
<div style="position:absolute;left:1693px;top:310px;font-size:10px;line-height:12px;color:#e6e6e6;font-weight:normal;white-space:nowrap;">Nudge Path</div>
<div style="position:absolute;left:1635px;top:327px;width:267px;height:1px;background:#464646"></div>
<div style="position:absolute;left:1641px;top:334px;width:12px;height:12px;border:1px solid #464646;box-sizing:border-box;border-right-color:#6a6a6a;border-bottom-color:#6a6a6a"></div>
<svg style="position:absolute;left:1667px;top:333px;" width="15" height="16" viewBox="0 0 15 16"><path d="M0.75 15.25 V0.75 H9 V2.75 H14.25 V15.25 Z" fill="#474747" stroke="#e0e0e0" stroke-width="1.5"/><rect x="0" y="0" width="9.75" height="2.75" fill="#e0e0e0"/><rect x="2.5" y="5" width="9.5" height="1.1" fill="#e0e0e0"/><rect x="2.5" y="7" width="9.5" height="1.1" fill="#e0e0e0"/><rect x="2.5" y="9" width="9.5" height="1.1" fill="#e0e0e0"/><rect x="2.5" y="11" width="9.5" height="1.1" fill="#e0e0e0"/></svg>
<div style="position:absolute;left:1693px;top:333px;font-size:10px;line-height:12px;color:#e6e6e6;font-weight:normal;white-space:nowrap;">Nudge Path</div>
<div style="position:absolute;left:1635px;top:350px;width:267px;height:1px;background:#464646"></div>
<div style="position:absolute;left:1641px;top:357px;width:12px;height:12px;border:1px solid #464646;box-sizing:border-box;border-right-color:#6a6a6a;border-bottom-color:#6a6a6a"></div>
<svg style="position:absolute;left:1667px;top:356px;" width="15" height="16" viewBox="0 0 15 16"><path d="M0.75 15.25 V0.75 H9 V2.75 H14.25 V15.25 Z" fill="#474747" stroke="#e0e0e0" stroke-width="1.5"/><rect x="0" y="0" width="9.75" height="2.75" fill="#e0e0e0"/><rect x="2.5" y="5" width="9.5" height="1.1" fill="#e0e0e0"/><rect x="2.5" y="7" width="9.5" height="1.1" fill="#e0e0e0"/><rect x="2.5" y="9" width="9.5" height="1.1" fill="#e0e0e0"/><rect x="2.5" y="11" width="9.5" height="1.1" fill="#e0e0e0"/></svg>
<div style="position:absolute;left:1693px;top:356px;font-size:10px;line-height:12px;color:#e6e6e6;font-weight:normal;white-space:nowrap;">Nudge Path</div>
<div style="position:absolute;left:1635px;top:373px;width:267px;height:1px;background:#464646"></div>
<div style="position:absolute;left:1641px;top:380px;width:12px;height:12px;border:1px solid #464646;box-sizing:border-box;border-right-color:#6a6a6a;border-bottom-color:#6a6a6a"></div>
<svg style="position:absolute;left:1667px;top:379px;" width="15" height="16" viewBox="0 0 15 16"><path d="M0.75 15.25 V0.75 H9 V2.75 H14.25 V15.25 Z" fill="#474747" stroke="#e0e0e0" stroke-width="1.5"/><rect x="0" y="0" width="9.75" height="2.75" fill="#e0e0e0"/><rect x="2.5" y="5" width="9.5" height="1.1" fill="#e0e0e0"/><rect x="2.5" y="7" width="9.5" height="1.1" fill="#e0e0e0"/><rect x="2.5" y="9" width="9.5" height="1.1" fill="#e0e0e0"/><rect x="2.5" y="11" width="9.5" height="1.1" fill="#e0e0e0"/></svg>
<div style="position:absolute;left:1693px;top:379px;font-size:10px;line-height:12px;color:#e6e6e6;font-weight:normal;white-space:nowrap;">Nudge Path</div>
<div style="position:absolute;left:1635px;top:396px;width:267px;height:1px;background:#464646"></div>
<div style="position:absolute;left:1641px;top:403px;width:12px;height:12px;border:1px solid #464646;box-sizing:border-box;border-right-color:#6a6a6a;border-bottom-color:#6a6a6a"></div>
<svg style="position:absolute;left:1667px;top:402px;" width="15" height="16" viewBox="0 0 15 16"><path d="M0.75 15.25 V0.75 H9 V2.75 H14.25 V15.25 Z" fill="#474747" stroke="#e0e0e0" stroke-width="1.5"/><rect x="0" y="0" width="9.75" height="2.75" fill="#e0e0e0"/><rect x="2.5" y="5" width="9.5" height="1.1" fill="#e0e0e0"/><rect x="2.5" y="7" width="9.5" height="1.1" fill="#e0e0e0"/><rect x="2.5" y="9" width="9.5" height="1.1" fill="#e0e0e0"/><rect x="2.5" y="11" width="9.5" height="1.1" fill="#e0e0e0"/></svg>
<div style="position:absolute;left:1693px;top:402px;font-size:10px;line-height:12px;color:#e6e6e6;font-weight:normal;white-space:nowrap;">Nudge Path</div>
<div style="position:absolute;left:1635px;top:419px;width:267px;height:1px;background:#464646"></div>
<div style="position:absolute;left:1641px;top:426px;width:12px;height:12px;border:1px solid #464646;box-sizing:border-box;border-right-color:#6a6a6a;border-bottom-color:#6a6a6a"></div>
<svg style="position:absolute;left:1667px;top:425px;" width="15" height="16" viewBox="0 0 15 16"><path d="M0.75 15.25 V0.75 H9 V2.75 H14.25 V15.25 Z" fill="#474747" stroke="#e0e0e0" stroke-width="1.5"/><rect x="0" y="0" width="9.75" height="2.75" fill="#e0e0e0"/><rect x="2.5" y="5" width="9.5" height="1.1" fill="#e0e0e0"/><rect x="2.5" y="7" width="9.5" height="1.1" fill="#e0e0e0"/><rect x="2.5" y="9" width="9.5" height="1.1" fill="#e0e0e0"/><rect x="2.5" y="11" width="9.5" height="1.1" fill="#e0e0e0"/></svg>
<div style="position:absolute;left:1693px;top:425px;font-size:10px;line-height:12px;color:#e6e6e6;font-weight:normal;white-space:nowrap;">Nudge Path</div>
<div style="position:absolute;left:1635px;top:442px;width:267px;height:1px;background:#464646"></div>
<div style="position:absolute;left:1635px;top:443px;width:268px;height:23px;background:#696969"></div>
<div style="position:absolute;left:1641px;top:449px;width:12px;height:12px;border:1px solid #464646;box-sizing:border-box;border-right-color:#6a6a6a;border-bottom-color:#6a6a6a"></div>
<svg style="position:absolute;left:1667px;top:448px;" width="15" height="16" viewBox="0 0 15 16"><path d="M0.75 15.25 V0.75 H9 V2.75 H14.25 V15.25 Z" fill="#474747" stroke="#e0e0e0" stroke-width="1.5"/><rect x="0" y="0" width="9.75" height="2.75" fill="#e0e0e0"/><rect x="2.5" y="5" width="9.5" height="1.1" fill="#e0e0e0"/><rect x="2.5" y="7" width="9.5" height="1.1" fill="#e0e0e0"/><rect x="2.5" y="9" width="9.5" height="1.1" fill="#e0e0e0"/><rect x="2.5" y="11" width="9.5" height="1.1" fill="#e0e0e0"/></svg>
<div style="position:absolute;left:1693px;top:448px;font-size:10px;line-height:12px;color:#e6e6e6;font-weight:normal;white-space:nowrap;">Drag Control Point (Save)</div>
<div style="position:absolute;left:1635px;top:466px;width:284px;height:25px;background:#535353"></div>
<div style="position:absolute;left:1635px;top:466px;width:284px;height:1px;background:#404040"></div>
<svg style="position:absolute;left:1816px;top:471px;" width="18" height="15" viewBox="0 0 18 15"><path d="M6 2 H12 V5.5 H16 V12 H6Z" fill="#e0e0e0"/><path d="M12.8 2 L16 5 H12.8Z" fill="#e0e0e0"/><path d="M2 8.8 H10 M6 4.8 V12.8" stroke="#535353" stroke-width="4"/><path d="M2 8.8 H10 M6 4.8 V12.8" stroke="#e0e0e0" stroke-width="2"/></svg>
<svg style="position:absolute;left:1850px;top:472px;" width="15" height="12" viewBox="0 0 15 12"><path d="M1 3 H4 L4.8 1 H10.2 L11 3 H14 V11 H1Z" fill="#e0e0e0"/><circle cx="7.3" cy="6.8" r="2.9" fill="none" stroke="#535353" stroke-width="1.2"/><circle cx="7.3" cy="6.8" r="1.3" fill="#e0e0e0"/></svg>
<svg style="position:absolute;left:1879px;top:472px;" width="13" height="15" viewBox="0 0 13 15"><path d="M4.5 2.5 V1.3 H8.5 V2.5" fill="none" stroke="#e0e0e0" stroke-width="1.2"/><rect x="0.8" y="2.6" width="11.4" height="1.6" fill="#e0e0e0"/><path d="M2.4 4 V12.6 H10.6 V4" fill="none" stroke="#e0e0e0" stroke-width="1.4"/><path d="M4.6 5.5 V11 M6.5 5.5 V11 M8.4 5.5 V11" stroke="#e0e0e0" stroke-width="1"/></svg>
<div style="position:absolute;left:1635px;top:491px;width:284px;height:3px;background:#474747;border-top:1px solid #3a3a3a;border-bottom:1px solid #3a3a3a;box-sizing:border-box"></div>
<div style="position:absolute;left:1635px;top:494px;width:284px;height:17px;background:#424242"></div>
<div style="position:absolute;left:1635px;top:494px;width:44px;height:17px;background:#535353"></div>
<div style="position:absolute;left:1679px;top:494px;width:1px;height:17px;background:#3b3b3b"></div>
<div style="position:absolute;left:1642px;top:497px;font-size:9px;line-height:11px;color:#f0f0f0;font-weight:bold;white-space:nowrap;">Layers</div>
<div style="position:absolute;left:1686px;top:497px;font-size:9.2px;line-height:11.2px;color:#a9a9a9;font-weight:bold;white-space:nowrap;">Channels</div>
<div style="position:absolute;left:1736px;top:494px;width:1px;height:17px;background:#3b3b3b"></div>
<div style="position:absolute;left:1744px;top:497px;font-size:9.4px;line-height:11.4px;color:#a9a9a9;font-weight:bold;white-space:nowrap;">Paths</div>
<div style="position:absolute;left:1778px;top:494px;width:1px;height:17px;background:#3b3b3b"></div>
<svg style="position:absolute;left:1903px;top:499px;" width="10" height="7" viewBox="0 0 10 7"><rect x="0" y="0" width="10" height="1" fill="#d4d4d4"/><rect x="0" y="2" width="10" height="1" fill="#d4d4d4"/><rect x="0" y="4" width="10" height="1" fill="#d4d4d4"/><rect x="0" y="6" width="10" height="1" fill="#d4d4d4"/></svg>
<div style="position:absolute;left:1635px;top:511px;width:284px;height:569px;background:#535353"></div>
<div style="position:absolute;left:1639px;top:519px;width:87px;height:20px;background:#454545;border:1px solid #616161;border-radius:3px;box-sizing:border-box"></div>
<svg style="position:absolute;left:1646px;top:523px;" width="11" height="12" viewBox="0 0 11 12"><circle cx="6.5" cy="4.5" r="3.3" fill="none" stroke="#dcdcdc" stroke-width="1.4"/><path d="M4 7 L1 10.5" stroke="#dcdcdc" stroke-width="2"/></svg>
<div style="position:absolute;left:1661px;top:524px;font-size:10px;line-height:12px;color:#f0f0f0;font-weight:normal;white-space:nowrap;">Kind</div>
<svg style="position:absolute;left:1713px;top:527px;" width="9" height="6" viewBox="0 0 9 6"><path d="M1 1 L4.5 4.5 L8 1" stroke="#cfcfcf" fill="none" stroke-width="1"/></svg>
<svg style="position:absolute;left:1736px;top:523px;" width="13" height="11" viewBox="0 0 13 11"><rect x="0.6" y="0.6" width="11.8" height="9.8" fill="none" stroke="#dcdcdc" stroke-width="1.2"/><path d="M2 9 L5 4.5 L7 7 L8.5 5.5 L11 9Z" fill="#dcdcdc"/></svg>
<svg style="position:absolute;left:1761px;top:523px;" width="12" height="12" viewBox="0 0 12 12"><circle cx="6" cy="6" r="5" fill="none" stroke="#dcdcdc" stroke-width="1.3"/><path d="M9.5 2.5 L2.5 9.5 A5 5 0 0 0 9.5 2.5Z" fill="#dcdcdc"/></svg>
<div style="position:absolute;left:1786px;top:522px;font-size:14px;line-height:16px;color:#dcdcdc;font-weight:bold;white-space:nowrap;font-family:'Liberation Serif',serif">T</div>
<svg style="position:absolute;left:1809px;top:523px;" width="13" height="13" viewBox="0 0 13 13"><rect x="2" y="2" width="9" height="9" fill="none" stroke="#dcdcdc" stroke-width="1.2"/><rect x="0.5" y="0.5" width="3" height="3" fill="#dcdcdc"/><rect x="9.5" y="0.5" width="3" height="3" fill="#dcdcdc"/><rect x="0.5" y="9.5" width="3" height="3" fill="#dcdcdc"/><rect x="9.5" y="9.5" width="3" height="3" fill="#dcdcdc"/></svg>
<svg style="position:absolute;left:1834px;top:522px;" width="12" height="14" viewBox="0 0 12 14"><path d="M4 1 H9 L11 3 V13 H4Z" fill="#dcdcdc"/><rect x="1" y="6" width="6" height="7" fill="#dcdcdc" stroke="#535353"/></svg>
<div style="position:absolute;left:1856px;top:518px;width:10px;height:17px;background:#4a4a4a;border-radius:5px;border:1px solid #474747;box-sizing:border-box"></div>
<div style="position:absolute;left:1857px;top:519px;width:8px;height:8px;background:#dcdcdc;border-radius:4px"></div>
<div style="position:absolute;left:1635px;top:542px;width:284px;height:1px;background:#474747"></div>
<div style="position:absolute;left:1638px;top:548px;width:128px;height:20px;background:#454545;border:1px solid #616161;border-radius:3px;box-sizing:border-box"></div>
<div style="position:absolute;left:1647px;top:552px;font-size:9.7px;line-height:11.7px;color:#f0f0f0;font-weight:normal;white-space:nowrap;">Normal</div>
<svg style="position:absolute;left:1753px;top:555px;" width="9" height="6" viewBox="0 0 9 6"><path d="M1 1 L4.5 4.5 L8 1" stroke="#cfcfcf" fill="none" stroke-width="1"/></svg>
<div style="position:absolute;left:1773px;top:551px;font-size:9.8px;line-height:11.8px;color:#d8d8d8;font-weight:normal;white-space:nowrap;">Opacity:</div>
<div style="position:absolute;left:1814px;top:549px;width:51px;height:17px;background:#454545;border:1px solid #616161;border-radius:3px;box-sizing:border-box"></div>
<div style="position:absolute;left:1849px;top:550px;width:1px;height:15px;background:#3b3b3b"></div>
<div style="position:absolute;left:1818px;top:552px;font-size:9.5px;line-height:11.5px;color:#f0f0f0;font-weight:normal;white-space:nowrap;">100%</div>
<svg style="position:absolute;left:1853px;top:555px;" width="9" height="6" viewBox="0 0 9 6"><path d="M1 1 L4.5 4.5 L8 1" stroke="#cfcfcf" fill="none" stroke-width="1"/></svg>
<div style="position:absolute;left:1635px;top:570px;width:284px;height:1px;background:#474747"></div>
<div style="position:absolute;left:1641px;top:580px;font-size:10px;line-height:12px;color:#d8d8d8;font-weight:normal;white-space:nowrap;">Lock:</div>
<svg style="position:absolute;left:1674px;top:579px;" width="12" height="12" viewBox="0 0 12 12"><rect x="0" y="0" width="4" height="4" fill="#8f8f8f"/><rect x="4" y="0" width="4" height="4" fill="#646464"/><rect x="8" y="0" width="4" height="4" fill="#8f8f8f"/><rect x="0" y="4" width="4" height="4" fill="#646464"/><rect x="4" y="4" width="4" height="4" fill="#8f8f8f"/><rect x="8" y="4" width="4" height="4" fill="#646464"/><rect x="0" y="8" width="4" height="4" fill="#8f8f8f"/><rect x="4" y="8" width="4" height="4" fill="#646464"/><rect x="8" y="8" width="4" height="4" fill="#8f8f8f"/></svg>
<svg style="position:absolute;left:1694px;top:578px;" width="16" height="16" viewBox="0 0 16 16"><path d="M14.5 1 L15.3 1.8 L8.6 9.6 L6.6 7.8Z" fill="#8c8c8c"/><path d="M5.6 8.4 C3.6 9.4 3.4 12 1 14.8 C4.2 15.3 7.4 13.8 8.2 11.4 C8.6 10.3 8 9.2 7.2 8.7 C6.7 8.4 6.2 8.2 5.6 8.4Z" fill="#8c8c8c"/></svg>
<svg style="position:absolute;left:1716px;top:577px;" width="14" height="14" viewBox="0 0 14 14"><path d="M7 1 V13 M1 7 H13" stroke="#dcdcdc" stroke-width="1.3"/><path d="M7 0 L9.5 3 H4.5Z M7 14 L9.5 11 H4.5Z M0 7 L3 4.5 V9.5Z M14 7 L11 4.5 V9.5Z" fill="#dcdcdc"/></svg>
<svg style="position:absolute;left:1738px;top:577px;" width="16" height="16" viewBox="0 0 16 16"><path d="M3 3.5 H10 L12.5 6 V12.5 H3Z" fill="none" stroke="#dcdcdc" stroke-width="1.2"/><path d="M10 3.5 V6 H12.5" fill="none" stroke="#dcdcdc" stroke-width="1"/><path d="M1 3.5 H2.2 M3 1 V2.2 M1 12.5 H2.2 M3 14.8 V13.4 M12.5 14.8 V13.4 M14.8 12.5 H13.4 M12.5 1.5 V2.4 M14.3 3 L13.5 3.8" stroke="#dcdcdc" stroke-width="1"/></svg>
<svg style="position:absolute;left:1762px;top:578px;" width="12" height="14" viewBox="0 0 12 14"><path d="M3 6 V4 A3 3 0 0 1 9 4 V6" stroke="#dcdcdc" stroke-width="1.6" fill="none"/><rect x="1" y="6" width="10" height="8" rx="1" fill="#dcdcdc"/><circle cx="6" cy="10" r="1.2" fill="#535353"/></svg>
<div style="position:absolute;left:1795px;top:579px;font-size:10px;line-height:12px;color:#d8d8d8;font-weight:normal;white-space:nowrap;">Fill:</div>
<div style="position:absolute;left:1814px;top:577px;width:51px;height:17px;background:#454545;border:1px solid #616161;border-radius:3px;box-sizing:border-box"></div>
<div style="position:absolute;left:1849px;top:578px;width:1px;height:15px;background:#3b3b3b"></div>
<div style="position:absolute;left:1818px;top:580px;font-size:9.5px;line-height:11.5px;color:#f0f0f0;font-weight:normal;white-space:nowrap;">100%</div>
<svg style="position:absolute;left:1853px;top:583px;" width="9" height="6" viewBox="0 0 9 6"><path d="M1 1 L4.5 4.5 L8 1" stroke="#cfcfcf" fill="none" stroke-width="1"/></svg>
<div style="position:absolute;left:1635px;top:599px;width:268px;height:1px;background:#474747"></div>
<div style="position:absolute;left:1665px;top:600px;width:238px;height:40px;background:#6a6a6a"></div>
<div style="position:absolute;left:1635px;top:640px;width:268px;height:1px;background:#474747"></div>
<div style="position:absolute;left:1664px;top:600px;width:1px;height:40px;background:#474747"></div>
<svg style="position:absolute;left:1643px;top:617px;" width="16" height="11" viewBox="0 0 16 11"><path d="M0.8 5 C3.5 0.2 11.5 0.2 14.2 5 C11.5 9.8 3.5 9.8 0.8 5Z" fill="#dcdcdc"/><circle cx="7.5" cy="5" r="2.9" fill="#464646"/><circle cx="8.6" cy="3.9" r="0.8" fill="#bdbdbd"/></svg>
<div style="position:absolute;left:1669px;top:605px;width:30px;height:32px;border:1px solid #2a2a2a;box-sizing:border-box;background-color:#9d9d9d;background-image:linear-gradient(45deg,#707070 25%,transparent 25%,transparent 75%,#707070 75%),linear-gradient(45deg,#707070 25%,transparent 25%,transparent 75%,#707070 75%);background-size:8px 8px;background-position:4px 0,0 4px"></div>
<div style="position:absolute;left:1684px;top:623px;width:15px;height:14px;background:#535353;border:1px solid #2a2a2a;box-sizing:border-box"></div>
<svg style="position:absolute;left:1686px;top:625px;" width="12" height="11" viewBox="0 0 12 11"><rect x="2.2" y="2.2" width="7.6" height="6.6" fill="none" stroke="#e6e6e6" stroke-width="1"/><circle cx="2.2" cy="2.2" r="1.4" fill="#535353" stroke="#e6e6e6" stroke-width="0.9"/><circle cx="9.8" cy="2.2" r="1.4" fill="#535353" stroke="#e6e6e6" stroke-width="0.9"/><circle cx="2.2" cy="8.8" r="1.4" fill="#535353" stroke="#e6e6e6" stroke-width="0.9"/><circle cx="9.8" cy="8.8" r="1.4" fill="#535353" stroke="#e6e6e6" stroke-width="0.9"/></svg>
<div style="position:absolute;left:1708px;top:616px;font-size:10.5px;line-height:12.5px;color:#e6e6e6;font-weight:normal;white-space:nowrap;">leg right</div>
<div style="position:absolute;left:1665px;top:641px;width:238px;height:40px;background:#6a6a6a"></div>
<div style="position:absolute;left:1635px;top:681px;width:268px;height:1px;background:#474747"></div>
<div style="position:absolute;left:1664px;top:641px;width:1px;height:40px;background:#474747"></div>
<svg style="position:absolute;left:1643px;top:658px;" width="16" height="11" viewBox="0 0 16 11"><path d="M0.8 5 C3.5 0.2 11.5 0.2 14.2 5 C11.5 9.8 3.5 9.8 0.8 5Z" fill="#dcdcdc"/><circle cx="7.5" cy="5" r="2.9" fill="#464646"/><circle cx="8.6" cy="3.9" r="0.8" fill="#bdbdbd"/></svg>
<div style="position:absolute;left:1669px;top:646px;width:30px;height:32px;border:1px solid #2a2a2a;box-sizing:border-box;background-color:#9d9d9d;background-image:linear-gradient(45deg,#707070 25%,transparent 25%,transparent 75%,#707070 75%),linear-gradient(45deg,#707070 25%,transparent 25%,transparent 75%,#707070 75%);background-size:8px 8px;background-position:4px 0,0 4px"></div>
<div style="position:absolute;left:1684px;top:664px;width:15px;height:14px;background:#535353;border:1px solid #2a2a2a;box-sizing:border-box"></div>
<svg style="position:absolute;left:1686px;top:666px;" width="12" height="11" viewBox="0 0 12 11"><rect x="2.2" y="2.2" width="7.6" height="6.6" fill="none" stroke="#e6e6e6" stroke-width="1"/><circle cx="2.2" cy="2.2" r="1.4" fill="#535353" stroke="#e6e6e6" stroke-width="0.9"/><circle cx="9.8" cy="2.2" r="1.4" fill="#535353" stroke="#e6e6e6" stroke-width="0.9"/><circle cx="2.2" cy="8.8" r="1.4" fill="#535353" stroke="#e6e6e6" stroke-width="0.9"/><circle cx="9.8" cy="8.8" r="1.4" fill="#535353" stroke="#e6e6e6" stroke-width="0.9"/></svg>
<div style="position:absolute;left:1708px;top:657px;font-size:10.5px;line-height:12.5px;color:#e6e6e6;font-weight:normal;white-space:nowrap;">leg left</div>
<div style="position:absolute;left:1665px;top:682px;width:238px;height:40px;background:#6a6a6a"></div>
<div style="position:absolute;left:1635px;top:722px;width:268px;height:1px;background:#474747"></div>
<div style="position:absolute;left:1664px;top:682px;width:1px;height:40px;background:#474747"></div>
<svg style="position:absolute;left:1643px;top:699px;" width="16" height="11" viewBox="0 0 16 11"><path d="M0.8 5 C3.5 0.2 11.5 0.2 14.2 5 C11.5 9.8 3.5 9.8 0.8 5Z" fill="#dcdcdc"/><circle cx="7.5" cy="5" r="2.9" fill="#464646"/><circle cx="8.6" cy="3.9" r="0.8" fill="#bdbdbd"/></svg>
<div style="position:absolute;left:1669px;top:687px;width:30px;height:32px;border:1px solid #2a2a2a;box-sizing:border-box;background-color:#9d9d9d;background-image:linear-gradient(45deg,#707070 25%,transparent 25%,transparent 75%,#707070 75%),linear-gradient(45deg,#707070 25%,transparent 25%,transparent 75%,#707070 75%);background-size:8px 8px;background-position:4px 0,0 4px"></div>
<div style="position:absolute;left:1684px;top:705px;width:15px;height:14px;background:#535353;border:1px solid #2a2a2a;box-sizing:border-box"></div>
<svg style="position:absolute;left:1686px;top:707px;" width="12" height="11" viewBox="0 0 12 11"><rect x="2.2" y="2.2" width="7.6" height="6.6" fill="none" stroke="#e6e6e6" stroke-width="1"/><circle cx="2.2" cy="2.2" r="1.4" fill="#535353" stroke="#e6e6e6" stroke-width="0.9"/><circle cx="9.8" cy="2.2" r="1.4" fill="#535353" stroke="#e6e6e6" stroke-width="0.9"/><circle cx="2.2" cy="8.8" r="1.4" fill="#535353" stroke="#e6e6e6" stroke-width="0.9"/><circle cx="9.8" cy="8.8" r="1.4" fill="#535353" stroke="#e6e6e6" stroke-width="0.9"/></svg>
<div style="position:absolute;left:1708px;top:698px;font-size:10.5px;line-height:12.5px;color:#e6e6e6;font-weight:normal;white-space:nowrap;">head</div>
<div style="position:absolute;left:1665px;top:723px;width:238px;height:40px;background:#6a6a6a"></div>
<div style="position:absolute;left:1635px;top:763px;width:268px;height:1px;background:#474747"></div>
<div style="position:absolute;left:1664px;top:723px;width:1px;height:40px;background:#474747"></div>
<svg style="position:absolute;left:1643px;top:740px;" width="16" height="11" viewBox="0 0 16 11"><path d="M0.8 5 C3.5 0.2 11.5 0.2 14.2 5 C11.5 9.8 3.5 9.8 0.8 5Z" fill="#dcdcdc"/><circle cx="7.5" cy="5" r="2.9" fill="#464646"/><circle cx="8.6" cy="3.9" r="0.8" fill="#bdbdbd"/></svg>
<div style="position:absolute;left:1669px;top:728px;width:30px;height:32px;border:1px solid #2a2a2a;box-sizing:border-box;background-color:#9d9d9d;background-image:linear-gradient(45deg,#707070 25%,transparent 25%,transparent 75%,#707070 75%),linear-gradient(45deg,#707070 25%,transparent 25%,transparent 75%,#707070 75%);background-size:8px 8px;background-position:4px 0,0 4px"></div>
<div style="position:absolute;left:1684px;top:746px;width:15px;height:14px;background:#535353;border:1px solid #2a2a2a;box-sizing:border-box"></div>
<svg style="position:absolute;left:1686px;top:748px;" width="12" height="11" viewBox="0 0 12 11"><rect x="2.2" y="2.2" width="7.6" height="6.6" fill="none" stroke="#e6e6e6" stroke-width="1"/><circle cx="2.2" cy="2.2" r="1.4" fill="#535353" stroke="#e6e6e6" stroke-width="0.9"/><circle cx="9.8" cy="2.2" r="1.4" fill="#535353" stroke="#e6e6e6" stroke-width="0.9"/><circle cx="2.2" cy="8.8" r="1.4" fill="#535353" stroke="#e6e6e6" stroke-width="0.9"/><circle cx="9.8" cy="8.8" r="1.4" fill="#535353" stroke="#e6e6e6" stroke-width="0.9"/></svg>
<div style="position:absolute;left:1708px;top:739px;font-size:10.5px;line-height:12.5px;color:#e6e6e6;font-weight:normal;white-space:nowrap;">neck</div>
<div style="position:absolute;left:1665px;top:764px;width:238px;height:40px;background:#6a6a6a"></div>
<div style="position:absolute;left:1635px;top:804px;width:268px;height:1px;background:#474747"></div>
<div style="position:absolute;left:1664px;top:764px;width:1px;height:40px;background:#474747"></div>
<svg style="position:absolute;left:1643px;top:781px;" width="16" height="11" viewBox="0 0 16 11"><path d="M0.8 5 C3.5 0.2 11.5 0.2 14.2 5 C11.5 9.8 3.5 9.8 0.8 5Z" fill="#dcdcdc"/><circle cx="7.5" cy="5" r="2.9" fill="#464646"/><circle cx="8.6" cy="3.9" r="0.8" fill="#bdbdbd"/></svg>
<div style="position:absolute;left:1669px;top:769px;width:30px;height:32px;border:1px solid #2a2a2a;box-sizing:border-box;background-color:#9d9d9d;background-image:linear-gradient(45deg,#707070 25%,transparent 25%,transparent 75%,#707070 75%),linear-gradient(45deg,#707070 25%,transparent 25%,transparent 75%,#707070 75%);background-size:8px 8px;background-position:4px 0,0 4px"></div>
<div style="position:absolute;left:1684px;top:787px;width:15px;height:14px;background:#535353;border:1px solid #2a2a2a;box-sizing:border-box"></div>
<svg style="position:absolute;left:1686px;top:789px;" width="12" height="11" viewBox="0 0 12 11"><rect x="2.2" y="2.2" width="7.6" height="6.6" fill="none" stroke="#e6e6e6" stroke-width="1"/><circle cx="2.2" cy="2.2" r="1.4" fill="#535353" stroke="#e6e6e6" stroke-width="0.9"/><circle cx="9.8" cy="2.2" r="1.4" fill="#535353" stroke="#e6e6e6" stroke-width="0.9"/><circle cx="2.2" cy="8.8" r="1.4" fill="#535353" stroke="#e6e6e6" stroke-width="0.9"/><circle cx="9.8" cy="8.8" r="1.4" fill="#535353" stroke="#e6e6e6" stroke-width="0.9"/></svg>
<div style="position:absolute;left:1708px;top:780px;font-size:10.5px;line-height:12.5px;color:#e6e6e6;font-weight:normal;white-space:nowrap;">body</div>
<div style="position:absolute;left:1665px;top:805px;width:238px;height:40px;background:#6a6a6a"></div>
<div style="position:absolute;left:1635px;top:845px;width:268px;height:1px;background:#474747"></div>
<div style="position:absolute;left:1664px;top:805px;width:1px;height:40px;background:#474747"></div>
<svg style="position:absolute;left:1643px;top:822px;" width="16" height="11" viewBox="0 0 16 11"><path d="M0.8 5 C3.5 0.2 11.5 0.2 14.2 5 C11.5 9.8 3.5 9.8 0.8 5Z" fill="#dcdcdc"/><circle cx="7.5" cy="5" r="2.9" fill="#464646"/><circle cx="8.6" cy="3.9" r="0.8" fill="#bdbdbd"/></svg>
<div style="position:absolute;left:1669px;top:810px;width:30px;height:32px;border:1px solid #2a2a2a;box-sizing:border-box;background-color:#9d9d9d;background-image:linear-gradient(45deg,#707070 25%,transparent 25%,transparent 75%,#707070 75%),linear-gradient(45deg,#707070 25%,transparent 25%,transparent 75%,#707070 75%);background-size:8px 8px;background-position:4px 0,0 4px"></div>
<div style="position:absolute;left:1684px;top:828px;width:15px;height:14px;background:#535353;border:1px solid #2a2a2a;box-sizing:border-box"></div>
<svg style="position:absolute;left:1686px;top:830px;" width="12" height="11" viewBox="0 0 12 11"><rect x="2.2" y="2.2" width="7.6" height="6.6" fill="none" stroke="#e6e6e6" stroke-width="1"/><circle cx="2.2" cy="2.2" r="1.4" fill="#535353" stroke="#e6e6e6" stroke-width="0.9"/><circle cx="9.8" cy="2.2" r="1.4" fill="#535353" stroke="#e6e6e6" stroke-width="0.9"/><circle cx="2.2" cy="8.8" r="1.4" fill="#535353" stroke="#e6e6e6" stroke-width="0.9"/><circle cx="9.8" cy="8.8" r="1.4" fill="#535353" stroke="#e6e6e6" stroke-width="0.9"/></svg>
<div style="position:absolute;left:1708px;top:821px;font-size:10.5px;line-height:12.5px;color:#e6e6e6;font-weight:normal;white-space:nowrap;">hand</div>
<div style="position:absolute;left:1665px;top:846px;width:238px;height:40px;background:#535353"></div>
<div style="position:absolute;left:1635px;top:886px;width:268px;height:1px;background:#474747"></div>
<div style="position:absolute;left:1664px;top:846px;width:1px;height:40px;background:#474747"></div>
<div style="position:absolute;left:1643px;top:861px;width:12px;height:12px;border:1px solid #464646;box-sizing:border-box;border-right-color:#6a6a6a;border-bottom-color:#6a6a6a"></div>
<div style="position:absolute;left:1669px;top:851px;width:30px;height:32px;border:1px solid #2a2a2a;box-sizing:border-box;background:#ffffff"></div>
<svg style="position:absolute;left:1673px;top:855px;" width="22" height="24" viewBox="0 0 22 24"><path d="M11 3 L13 2 L14.5 4 L14 8 L12 12 L10 10 L10 5Z" fill="#e3d24a"/><circle cx="11.5" cy="2.6" r="1" fill="#111"/><circle cx="6.5" cy="8" r="1.1" fill="#111"/><circle cx="16.5" cy="8" r="1" fill="#111"/><ellipse cx="12" cy="17" rx="3" ry="4" fill="#f3c9cd"/><circle cx="5" cy="14" r="0.7" fill="#87acd4"/><circle cx="6" cy="19" r="0.7" fill="#87acd4"/><circle cx="8" cy="21" r="0.7" fill="#9bd"/></svg>
<div style="position:absolute;left:1684px;top:869px;width:15px;height:14px;background:#535353;border:1px solid #2a2a2a;box-sizing:border-box"></div>
<svg style="position:absolute;left:1686px;top:870px;" width="12" height="13" viewBox="0 0 12 13"><path d="M4.5 1 H8 L10.5 3.5 V9.5 H4.5Z" fill="#dcdcdc"/><rect x="1.5" y="6.5" width="5" height="4" fill="#dcdcdc" stroke="#535353"/><rect x="2" y="11.5" width="4" height="1" fill="#dcdcdc"/></svg>
<div style="position:absolute;left:1708px;top:862px;font-size:10.5px;line-height:12.5px;color:#e6e6e6;font-weight:normal;white-space:nowrap;">Layer 0</div>
<div style="position:absolute;left:1903px;top:600px;width:16px;height:446px;background:#4d4d4d"></div>
<svg style="position:absolute;left:1687px;top:618px;" width="7" height="7" viewBox="0 0 7 7"><path d="M1.5 5.5 C3 5 4 3.5 4.8 1.2 L5.8 1.8 C5 4 4 6 2 6.4Z" fill="#87acd4"/></svg>
<svg style="position:absolute;left:1673px;top:659px;" width="9" height="17" viewBox="0 0 9 17"><path d="M3 1 C4 1 4.5 3 4.5 5 C4.5 7 6 8 6.5 10 C7 12 6 14.5 4 14.5 C2 14.5 1 13 1.5 11 C2 9 2.5 7 2.5 4Z" fill="#87acd4"/></svg>
<svg style="position:absolute;left:1680px;top:696px;" width="10" height="8" viewBox="0 0 10 8"><ellipse cx="4.5" cy="3.5" rx="3.5" ry="2.8" fill="#f3c9cd"/></svg>
<svg style="position:absolute;left:1682px;top:739px;" width="6" height="8" viewBox="0 0 6 8"><path d="M0.5 0.5 C3 1 5 3 5 4 C5 5 3 6.5 1 7Z" fill="#f3c9cd"/></svg>
<svg style="position:absolute;left:1677px;top:783px;" width="14" height="13" viewBox="0 0 14 13"><ellipse cx="9" cy="2.5" rx="3.5" ry="2" fill="#f3c9cd"/><ellipse cx="4" cy="8.5" rx="2.8" ry="3.8" fill="#f3c9cd"/></svg>
<svg style="position:absolute;left:1750px;top:620px;" width="26" height="24" viewBox="0 0 26 24"><path d="M10.3 5.8 C10.3 3.6 13.8 3.6 13.8 5.8 V10.5 C14.5 9.6 16.6 9.6 17 10.8 C17.6 10 19.6 10.2 20 11.6 C20.6 11 22 11.4 22 12.8 C22 15.5 20.8 18.5 19.2 20.4 H11.2 C9.5 18.5 7.5 16.5 5.5 13.6 C4.7 12.4 5.8 10.9 7.2 11.6 L10.3 14 Z" fill="#ffffff" stroke="#111" stroke-width="1.4" stroke-linejoin="round"/><path d="M13.8 10.5 V13 M17 10.8 V13.5 M20 11.6 V14" stroke="#111" stroke-width="0.9"/></svg>
<div style="position:absolute;left:1635px;top:1046px;width:284px;height:1px;background:#404040"></div>
<svg style="position:absolute;left:1716px;top:1053px;" width="16" height="10" viewBox="0 0 16 10"><rect x="1" y="1.5" width="7" height="6" rx="3" fill="none" stroke="#dcdcdc" stroke-width="1.6"/><rect x="7" y="1.5" width="7" height="6" rx="3" fill="none" stroke="#dcdcdc" stroke-width="1.6"/><rect x="4.5" y="4" width="7" height="1.4" fill="#dcdcdc"/></svg>
<div style="position:absolute;left:1745px;top:1051px;font-size:14.5px;line-height:16.5px;color:#8f8f8f;font-weight:normal;white-space:nowrap;font-style:italic;letter-spacing:-0.5px">fx</div>
<svg style="position:absolute;left:1755px;top:1064px;" width="5" height="3" viewBox="0 0 5 3"><path d="M0 0 H4 L2 2.5Z" fill="#6f6f6f"/></svg>
<svg style="position:absolute;left:1770px;top:1053px;" width="14" height="10" viewBox="0 0 14 10"><rect x="0" y="0" width="14" height="10" fill="#9a9a9a"/><circle cx="7" cy="5" r="2.8" fill="#535353"/></svg>
<svg style="position:absolute;left:1799px;top:1052px;" width="14" height="14" viewBox="0 0 14 14"><circle cx="6" cy="6" r="5" fill="none" stroke="#dcdcdc" stroke-width="1.2"/><path d="M9.5 2.5 L2.5 9.5 A5 5 0 0 0 9.5 2.5Z" fill="#dcdcdc"/><path d="M9 12 L13 12 L11 14Z" fill="#fff"/></svg>
<svg style="position:absolute;left:1825px;top:1052px;" width="14" height="12" viewBox="0 0 14 12"><path d="M0.5 2 H5 L6 3 H13.5 V11.5 H0.5Z" fill="#dcdcdc"/><rect x="0.5" y="0.5" width="5" height="1" fill="#dcdcdc"/></svg>
<svg style="position:absolute;left:1853px;top:1053px;" width="12" height="12" viewBox="0 0 12 12"><path d="M0.75 0.75 H10.25 V10.25 H4 L0.75 7 Z" fill="#3a3a3a" stroke="#e0e0e0" stroke-width="1.5" stroke-linejoin="round"/><path d="M0.75 0.75 H10.25 V10.25 H4 L0.75 7 Z" fill="none" stroke="#e0e0e0" stroke-width="1.5" stroke-linejoin="round"/><path d="M0.75 7 H4 V10.25Z" fill="#e0e0e0"/></svg>
<svg style="position:absolute;left:1879px;top:1052px;" width="13" height="15" viewBox="0 0 13 15"><path d="M4.5 2.5 V1.3 H8.5 V2.5" fill="none" stroke="#e0e0e0" stroke-width="1.2"/><rect x="0.8" y="2.6" width="11.4" height="1.6" fill="#e0e0e0"/><path d="M2.4 4 V12.6 H10.6 V4" fill="none" stroke="#e0e0e0" stroke-width="1.4"/><path d="M4.6 5.5 V11 M6.5 5.5 V11 M8.4 5.5 V11" stroke="#e0e0e0" stroke-width="1"/></svg>
<div style="position:absolute;left:1635px;top:1071px;width:284px;height:2px;background:#383838"></div>
<div style="position:absolute;left:1635px;top:1073px;width:284px;height:7px;background:#535353"></div>
<svg style="position:absolute;left:1767px;top:1073px;" width="20" height="4" viewBox="0 0 20 4"><rect x="0" y="0" width="1" height="3" fill="#3e3e3e"/><rect x="2" y="0" width="1" height="3" fill="#3e3e3e"/><rect x="4" y="0" width="1" height="3" fill="#3e3e3e"/><rect x="6" y="0" width="1" height="3" fill="#3e3e3e"/><rect x="8" y="0" width="1" height="3" fill="#3e3e3e"/><rect x="10" y="0" width="1" height="3" fill="#3e3e3e"/><rect x="12" y="0" width="1" height="3" fill="#3e3e3e"/><rect x="14" y="0" width="1" height="3" fill="#3e3e3e"/><rect x="16" y="0" width="1" height="3" fill="#3e3e3e"/><rect x="18" y="0" width="1" height="3" fill="#3e3e3e"/></svg>
</body></html>
